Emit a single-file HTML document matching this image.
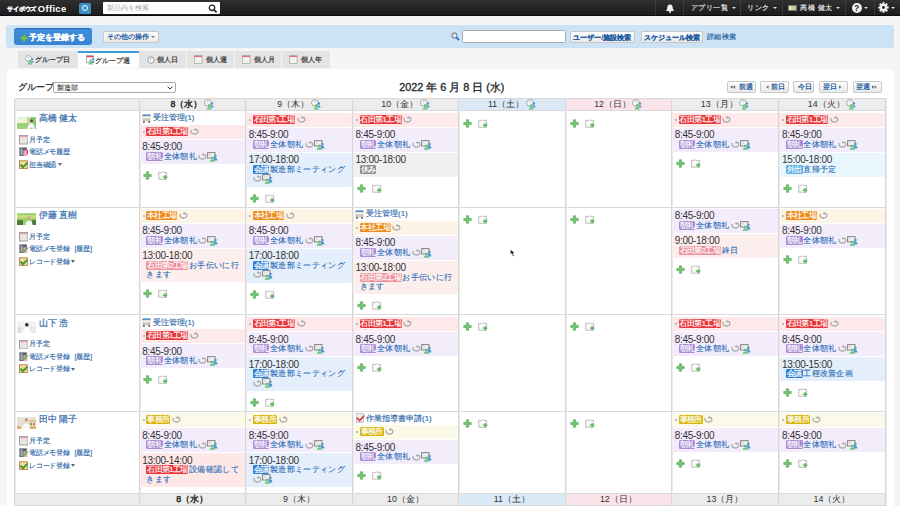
<!DOCTYPE html><html lang="ja"><head><meta charset="utf-8"><style>
*{box-sizing:border-box}
html,body{margin:0;padding:0}
body{width:900px;height:506px;overflow:hidden;position:relative;background:#f5f5f5;font-family:"Liberation Sans",sans-serif;color:#333}
.a{position:absolute}
#hd{left:0;top:0;width:900px;height:15.5px;background:linear-gradient(#303030,#1b1b1b);border-bottom:1px solid #0c0c0c}
.nav{position:absolute;top:0;height:15px;color:#e6e6e6;font-size:7.35px;letter-spacing:0.6px;line-height:15px;white-space:nowrap;-webkit-text-stroke:0.15px #eee}
.sep{position:absolute;top:0;width:1px;height:15px;background:#111;border-right:1px solid #3a3a3a}
.caret{display:inline-block;width:0;height:0;border-left:2px solid transparent;border-right:2px solid transparent;border-top:2.5px solid #ddd;vertical-align:middle;margin-left:3px}
#tb{left:6px;top:25px;width:888px;height:22.5px;background:#cbe3f5;border-radius:3px}
.btn{position:absolute;background:linear-gradient(#fdfdfd,#e9e9e9);border:1px solid #c8c8c8;border-radius:2px;color:#1f5d9f;font-weight:bold;font-size:7px;text-align:center;white-space:nowrap;-webkit-text-stroke:0.1px #1f5d9f}
.tab{position:absolute;top:51px;height:17px;background:#e4e4e4;font-size:7px;line-height:17px;color:#222;white-space:nowrap;-webkit-text-stroke:0.15px #222}
#panel{left:6.5px;top:68.5px;width:887px;height:440px;background:#fff;border-radius:4px 4px 0 0}
.hdr{position:absolute;height:12px;background:#ececec;font-size:8.8px;line-height:12px;text-align:center;color:#333;white-space:nowrap}
.vl{position:absolute;width:1px;background:#dcdcdc}
.hl{position:absolute;height:1px;background:#d9d9d9}
.cell{position:absolute;font-size:8.3px}
.ev{border-radius:1.2px;margin-bottom:1px;position:relative;overflow:hidden}
.t{position:absolute;left:2.4px;font-size:10px;letter-spacing:-0.3px;color:#333;white-space:nowrap}
.lb{display:inline-block;color:#fff;border-radius:1.5px;font-size:7.6px;letter-spacing:-0.6px;height:9px;line-height:9px;padding:0;text-align:center;vertical-align:top;white-space:nowrap;-webkit-text-stroke:0.15px #fff;margin-right:0.7px;overflow:hidden}
.tl{position:absolute;left:6.6px;white-space:nowrap;color:#2a6db8;font-size:8.3px;letter-spacing:0.3px;line-height:9px;-webkit-text-stroke:0.12px #2a6db8}
.dot{position:absolute;left:2.9px;width:2px;height:2px;border-radius:1px;background:#aaa}
.ulink{position:absolute;left:15px;font-size:6.7px;color:#2f6aa9;white-space:nowrap}
</style></head><body>
<div id="hd" class="a"></div>
<div class="a" style="left:7.3px;top:4.5px;font-size:6.2px;line-height:8px;font-weight:bold;color:#fff;white-space:nowrap;letter-spacing:-0.2px;-webkit-text-stroke:0.2px #fff">サイボウズ</div><div class="a" style="left:37.8px;top:0;line-height:17px;font-size:9.4px;letter-spacing:0.35px;font-weight:bold;color:#fff;white-space:nowrap">Office</div>
<div class="a" style="left:79px;top:2.5px;width:12px;height:11px;background:#3a8dc5;border-radius:1.5px"><div class="a" style="left:3px;top:2.5px;width:6px;height:6px;border:1.5px solid #fff;border-radius:50%"></div></div>
<div class="a" style="left:103px;top:2px;width:117px;height:11.5px;background:#fff;border-radius:1px"><div class="a" style="left:4px;top:0;line-height:11.5px;font-size:7px;color:#aaa;white-space:nowrap">製品内を検索</div><svg class="a" style="left:105px;top:1.5px" width="10" height="9" viewBox="0 0 10 9"><circle cx="4" cy="3.8" r="2.7" fill="none" stroke="#222" stroke-width="1.3"/><path d="M6 5.8 L8.6 8.4" stroke="#222" stroke-width="1.7"/></svg></div>
<div class="sep" style="left:655px"></div>
<div class="sep" style="left:683px"></div>
<div class="sep" style="left:739.5px"></div>
<div class="sep" style="left:781.5px"></div>
<div class="sep" style="left:845px"></div>
<div class="sep" style="left:873.5px"></div>
<svg class="a" style="left:664.5px;top:3.5px" width="10" height="9" viewBox="0 0 10 9"><path d="M5 0.5 C2.6 0.5 2.3 2.5 2.2 4.5 L1 7 H9 L7.8 4.5 C7.7 2.5 7.4 0.5 5 0.5 Z" fill="#f0f0f0"/><circle cx="5" cy="7.8" r="1.1" fill="#f0f0f0"/></svg>
<div class="nav" style="left:690.5px">アプリ一覧<span class="caret"></span></div>
<div class="nav" style="left:747px">リンク<span class="caret"></span></div>
<div class="a" style="left:788px;top:4.5px;width:9px;height:6.5px;background:linear-gradient(90deg,#e6efc9,#9cc47a);border:0.5px solid #777"></div>
<div class="nav" style="left:800px">高橋 健太<span class="caret"></span></div>
<div class="a" style="left:851.5px;top:2.5px;width:10px;height:10px;border-radius:50%;background:#f2f2f2;color:#222;font-size:8.5px;font-weight:bold;line-height:10px;text-align:center">?</div><span class="caret a" style="left:864px;top:6.5px;margin:0"></span>
<svg class="a" style="left:877.5px;top:2px" width="11" height="11" viewBox="0 0 11 11"><g fill="#f2f2f2"><circle cx="5.5" cy="5.5" r="3.4"/><rect x="4.4" y="0.3" width="2.2" height="3" transform="rotate(0 5.5 5.5)"/><rect x="4.4" y="0.3" width="2.2" height="3" transform="rotate(45 5.5 5.5)"/><rect x="4.4" y="0.3" width="2.2" height="3" transform="rotate(90 5.5 5.5)"/><rect x="4.4" y="0.3" width="2.2" height="3" transform="rotate(135 5.5 5.5)"/><rect x="4.4" y="0.3" width="2.2" height="3" transform="rotate(180 5.5 5.5)"/><rect x="4.4" y="0.3" width="2.2" height="3" transform="rotate(225 5.5 5.5)"/><rect x="4.4" y="0.3" width="2.2" height="3" transform="rotate(270 5.5 5.5)"/><rect x="4.4" y="0.3" width="2.2" height="3" transform="rotate(315 5.5 5.5)"/></g><circle cx="5.5" cy="5.5" r="1.4" fill="#222"/></svg><span class="caret a" style="left:891px;top:6.5px;margin:0"></span>
<div id="tb" class="a"></div>
<div class="a" style="left:13.7px;top:27.6px;width:78px;height:17.7px;background:linear-gradient(#3f8ddb,#3884d2);border-top:1px solid #2d70b8;border-radius:3px;color:#fff;font-weight:bold;font-size:8.2px;line-height:17.7px;white-space:nowrap"><svg class="a" style="left:6.5px;top:5px" width="8" height="8" viewBox="0 0 8 8"><path d="M2.8 0.4 H5.2 V2.8 H7.6 V5.2 H5.2 V7.6 H2.8 V5.2 H0.4 V2.8 H2.8 Z" fill="#74c35e" stroke="#4f9a3c" stroke-width="0.4"/></svg><span class="a" style="left:15.8px;top:0;font-size:8.1px;-webkit-text-stroke:0.25px #fff">予定を登録する</span></div>
<div class="btn" style="left:102.5px;top:30.5px;width:56.5px;height:12.8px;line-height:10.5px;text-align:left;padding-left:3.2px;font-size:6.75px;-webkit-text-stroke:0px">その他の操作</div><span class="caret a" style="left:150.5px;top:36px;margin:0;border-top-color:#777;border-left-width:2.3px;border-right-width:2.3px;border-top-width:2.8px"></span>
<svg class="a" style="left:451px;top:32px" width="9" height="9" viewBox="0 0 9 9"><circle cx="3.5" cy="3.5" r="2.6" fill="#dde8f0" stroke="#5a6a78" stroke-width="1"/><path d="M5.3 5.3 L8.2 8.2" stroke="#2f6fb0" stroke-width="1.8"/></svg>
<div class="a" style="left:461.5px;top:30px;width:104px;height:12.7px;background:#fff;border:1px solid #a9a9a9;border-radius:1.5px"></div>
<div class="btn" style="left:569.5px;top:30.5px;width:65.5px;height:12.8px;line-height:11px">ユーザー/施設検索</div>
<div class="btn" style="left:640.5px;top:30.5px;width:62.2px;height:12.8px;line-height:11px">スケジュール検索</div>
<div class="a" style="left:706.6px;top:30.5px;line-height:12.8px;font-size:7.3px;letter-spacing:0.5px;color:#2f6aa9;white-space:nowrap;-webkit-text-stroke:0.2px #2f6aa9">詳細検索</div>
<div class="tab" style="left:17.6px;width:60px;background:#e4e4e4;"><span class="a" style="left:17.5px;top:0">グループ日</span></div>
<div class="tab" style="left:77.6px;width:61px;background:#fff;border-top:2px solid #3f9bd8;line-height:15px;"><span class="a" style="left:17.5px;top:0">グループ週</span></div>
<div class="tab" style="left:138.6px;width:47px;background:#e4e4e4;"><span class="a" style="left:18.5px;top:0">個人日</span></div>
<div class="tab" style="left:187px;width:47px;background:#e4e4e4;"><span class="a" style="left:18.5px;top:0">個人週</span></div>
<div class="tab" style="left:235px;width:46px;background:#e4e4e4;"><span class="a" style="left:18.5px;top:0">個人月</span></div>
<div class="tab" style="left:282.4px;width:47.2px;background:#e4e4e4;"><span class="a" style="left:18.5px;top:0">個人年</span></div>
<svg class="a" style="left:24.8px;top:55px" width="9" height="10" viewBox="0 0 10 11"><circle cx="3.9" cy="3.9" r="3.3" fill="#fff" stroke="#999" stroke-width="0.9"/><path d="M3.9 1.8 V4.2" stroke="#999" stroke-width="0.6"/><circle cx="7.9" cy="4.6" r="1.25" fill="#4a98d6"/><path d="M6.4 8.6 Q6.6 6.2 7.9 6.2 Q9.4 6.2 9.6 8.6 Z" fill="#4a98d6"/><circle cx="5.2" cy="6.4" r="1.5" fill="#6cc47a"/><path d="M2.7 10.6 Q2.9 8 5.2 8 Q7.5 8 7.7 10.6 Z" fill="#6cc47a"/></svg>
<svg class="a" style="left:85.5px;top:55px" width="9" height="10" viewBox="0 0 10 11"><rect x="0.5" y="0.8" width="8" height="7.5" fill="#f8f8f8" stroke="#888" stroke-width="0.7"/><rect x="0.5" y="0.8" width="8" height="1.6" fill="#e05050"/><circle cx="7.9" cy="4.6" r="1.25" fill="#4a98d6"/><path d="M6.4 8.6 Q6.6 6.2 7.9 6.2 Q9.4 6.2 9.6 8.6 Z" fill="#4a98d6"/><circle cx="5.2" cy="6.4" r="1.5" fill="#6cc47a"/><path d="M2.7 10.6 Q2.9 8 5.2 8 Q7.5 8 7.7 10.6 Z" fill="#6cc47a"/></svg>
<svg class="a" style="left:147px;top:55.8px" width="8" height="8" viewBox="0 0 9 9"><circle cx="4.5" cy="4.5" r="3.6" fill="#fff" stroke="#777" stroke-width="0.8"/><path d="M4.5 2.2 L3.6 5.2" stroke="#777" stroke-width="0.7"/></svg>
<svg class="a" style="left:194px;top:55.3px" width="9" height="9" viewBox="0 0 10 10"><rect x="0.5" y="0.8" width="8.5" height="8.5" fill="#f2f2f2" stroke="#999" stroke-width="0.7"/><rect x="0.5" y="0.8" width="8.5" height="1.5" fill="#e07080"/></svg>
<svg class="a" style="left:241.5px;top:55.3px" width="9" height="9" viewBox="0 0 10 10"><rect x="0.5" y="0.8" width="8.5" height="8.5" fill="#f2f2f2" stroke="#999" stroke-width="0.7"/><rect x="0.5" y="0.8" width="8.5" height="1.5" fill="#e07080"/></svg>
<svg class="a" style="left:289px;top:55.3px" width="9" height="9" viewBox="0 0 10 10"><rect x="0.5" y="0.8" width="8.5" height="8.5" fill="#f2f2f2" stroke="#999" stroke-width="0.7"/><rect x="0.5" y="0.8" width="8.5" height="1.5" fill="#e07080"/></svg>
<div id="panel" class="a"></div>
<div class="a" style="left:17.6px;top:80px;font-size:8.7px;line-height:14px;color:#2a2a2a;white-space:nowrap;-webkit-text-stroke:0.25px #2a2a2a">グループ</div>
<div class="a" style="left:53px;top:81.6px;width:123px;height:11.6px;border:1px solid #a9a9a9;border-radius:2px;background:#fff"><span class="a" style="left:3px;top:0;font-size:7.3px;line-height:10px;color:#333;-webkit-text-stroke:0.1px #333">製造部</span><svg class="a" style="left:113px;top:3px" width="6" height="4" viewBox="0 0 6 4"><path d="M0.6 0.6 L3 3 L5.4 0.6" fill="none" stroke="#333" stroke-width="1"/></svg></div>
<div class="a" style="left:399.2px;top:79.6px;font-size:10.8px;line-height:14px;color:#222;white-space:nowrap;letter-spacing:0px;-webkit-text-stroke:0.3px #222">2022 年 6 月 8 日 (水)</div>
<div class="btn" style="left:726.5px;top:81px;width:29.5px;height:12.2px"></div>
<div class="a" style="left:738.5px;top:81px;line-height:12.2px;font-size:6.9px;font-weight:bold;color:#1f5d9f;white-space:nowrap">前週</div>
<svg class="a" style="left:730px;top:85.2px" width="5.7" height="4" viewBox="0 0 5.7 4"><path d="M2.6 0.3 L0.0 2 L2.6 3.7 Z" fill="#777"/><path d="M5.2 0.3 L2.6 2 L5.2 3.7 Z" fill="#777"/></svg>
<div class="btn" style="left:760px;top:81px;width:29px;height:12.2px"></div>
<div class="a" style="left:771.2px;top:81px;line-height:12.2px;font-size:6.9px;font-weight:bold;color:#1f5d9f;white-space:nowrap">前日</div>
<svg class="a" style="left:766px;top:85.2px" width="3.1" height="4" viewBox="0 0 3.1 4"><path d="M2.6 0.3 L0.0 2 L2.6 3.7 Z" fill="#777"/></svg>
<div class="btn" style="left:793.4px;top:81px;width:21px;height:12.2px"></div>
<div class="a" style="left:797.6px;top:81px;line-height:12.2px;font-size:6.9px;font-weight:bold;color:#1f5d9f;white-space:nowrap">今日</div>
<div class="btn" style="left:819px;top:81px;width:29px;height:12.2px"></div>
<div class="a" style="left:823px;top:81px;line-height:12.2px;font-size:6.9px;font-weight:bold;color:#1f5d9f;white-space:nowrap">翌日</div>
<svg class="a" style="left:839.2px;top:85.2px" width="3.1" height="4" viewBox="0 0 3.1 4"><path d="M0.0 0.3 L2.6 2 L0.0 3.7 Z" fill="#777"/></svg>
<div class="btn" style="left:852.5px;top:81px;width:29.5px;height:12.2px"></div>
<div class="a" style="left:856px;top:81px;line-height:12.2px;font-size:6.9px;font-weight:bold;color:#1f5d9f;white-space:nowrap">翌週</div>
<svg class="a" style="left:871.5px;top:85.2px" width="5.7" height="4" viewBox="0 0 5.7 4"><path d="M0.0 0.3 L2.6 2 L0.0 3.7 Z" fill="#777"/><path d="M2.6 0.3 L5.2 2 L2.6 3.7 Z" fill="#777"/></svg>
<div class="hdr" style="left:14px;top:98px;width:125px"></div><div class="hdr" style="left:139px;top:98px;width:106.5px;background:#ececec;-webkit-text-stroke:0.4px #222;color:#222;">8（水）<svg style="vertical-align:top;margin-top:0.5px;margin-left:1.5px" width="10" height="11" viewBox="0 0 10 11"><circle cx="3.9" cy="3.9" r="3.3" fill="#fff" stroke="#999" stroke-width="0.9"/><path d="M3.9 1.8 V4.2" stroke="#999" stroke-width="0.6"/><circle cx="7.9" cy="4.6" r="1.25" fill="#4a98d6"/><path d="M6.4 8.6 Q6.6 6.2 7.9 6.2 Q9.4 6.2 9.6 8.6 Z" fill="#4a98d6"/><circle cx="5.2" cy="6.4" r="1.5" fill="#6cc47a"/><path d="M2.7 10.6 Q2.9 8 5.2 8 Q7.5 8 7.7 10.6 Z" fill="#6cc47a"/></svg></div><div class="hdr" style="left:245.5px;top:98px;width:106.80000000000001px;background:#ececec;">9（木）<svg style="vertical-align:top;margin-top:0.5px;margin-left:1.5px" width="10" height="11" viewBox="0 0 10 11"><circle cx="3.9" cy="3.9" r="3.3" fill="#fff" stroke="#999" stroke-width="0.9"/><path d="M3.9 1.8 V4.2" stroke="#999" stroke-width="0.6"/><circle cx="7.9" cy="4.6" r="1.25" fill="#4a98d6"/><path d="M6.4 8.6 Q6.6 6.2 7.9 6.2 Q9.4 6.2 9.6 8.6 Z" fill="#4a98d6"/><circle cx="5.2" cy="6.4" r="1.5" fill="#6cc47a"/><path d="M2.7 10.6 Q2.9 8 5.2 8 Q7.5 8 7.7 10.6 Z" fill="#6cc47a"/></svg></div><div class="hdr" style="left:352.3px;top:98px;width:106.19999999999999px;background:#ececec;">10（金）<svg style="vertical-align:top;margin-top:0.5px;margin-left:1.5px" width="10" height="11" viewBox="0 0 10 11"><circle cx="3.9" cy="3.9" r="3.3" fill="#fff" stroke="#999" stroke-width="0.9"/><path d="M3.9 1.8 V4.2" stroke="#999" stroke-width="0.6"/><circle cx="7.9" cy="4.6" r="1.25" fill="#4a98d6"/><path d="M6.4 8.6 Q6.6 6.2 7.9 6.2 Q9.4 6.2 9.6 8.6 Z" fill="#4a98d6"/><circle cx="5.2" cy="6.4" r="1.5" fill="#6cc47a"/><path d="M2.7 10.6 Q2.9 8 5.2 8 Q7.5 8 7.7 10.6 Z" fill="#6cc47a"/></svg></div><div class="hdr" style="left:458.5px;top:98px;width:106.79999999999995px;background:#dbe9f7;">11（土）<svg style="vertical-align:top;margin-top:0.5px;margin-left:1.5px" width="10" height="11" viewBox="0 0 10 11"><circle cx="3.9" cy="3.9" r="3.3" fill="#fff" stroke="#999" stroke-width="0.9"/><path d="M3.9 1.8 V4.2" stroke="#999" stroke-width="0.6"/><circle cx="7.9" cy="4.6" r="1.25" fill="#4a98d6"/><path d="M6.4 8.6 Q6.6 6.2 7.9 6.2 Q9.4 6.2 9.6 8.6 Z" fill="#4a98d6"/><circle cx="5.2" cy="6.4" r="1.5" fill="#6cc47a"/><path d="M2.7 10.6 Q2.9 8 5.2 8 Q7.5 8 7.7 10.6 Z" fill="#6cc47a"/></svg></div><div class="hdr" style="left:565.3px;top:98px;width:106.10000000000002px;background:#fbe3ea;">12（日）<svg style="vertical-align:top;margin-top:0.5px;margin-left:1.5px" width="10" height="11" viewBox="0 0 10 11"><circle cx="3.9" cy="3.9" r="3.3" fill="#fff" stroke="#999" stroke-width="0.9"/><path d="M3.9 1.8 V4.2" stroke="#999" stroke-width="0.6"/><circle cx="7.9" cy="4.6" r="1.25" fill="#4a98d6"/><path d="M6.4 8.6 Q6.6 6.2 7.9 6.2 Q9.4 6.2 9.6 8.6 Z" fill="#4a98d6"/><circle cx="5.2" cy="6.4" r="1.5" fill="#6cc47a"/><path d="M2.7 10.6 Q2.9 8 5.2 8 Q7.5 8 7.7 10.6 Z" fill="#6cc47a"/></svg></div><div class="hdr" style="left:671.4px;top:98px;width:107.20000000000005px;background:#ececec;">13（月）<svg style="vertical-align:top;margin-top:0.5px;margin-left:1.5px" width="10" height="11" viewBox="0 0 10 11"><circle cx="3.9" cy="3.9" r="3.3" fill="#fff" stroke="#999" stroke-width="0.9"/><path d="M3.9 1.8 V4.2" stroke="#999" stroke-width="0.6"/><circle cx="7.9" cy="4.6" r="1.25" fill="#4a98d6"/><path d="M6.4 8.6 Q6.6 6.2 7.9 6.2 Q9.4 6.2 9.6 8.6 Z" fill="#4a98d6"/><circle cx="5.2" cy="6.4" r="1.5" fill="#6cc47a"/><path d="M2.7 10.6 Q2.9 8 5.2 8 Q7.5 8 7.7 10.6 Z" fill="#6cc47a"/></svg></div><div class="hdr" style="left:778.6px;top:98px;width:106.60000000000002px;background:#ececec;">14（火）<svg style="vertical-align:top;margin-top:0.5px;margin-left:1.5px" width="10" height="11" viewBox="0 0 10 11"><circle cx="3.9" cy="3.9" r="3.3" fill="#fff" stroke="#999" stroke-width="0.9"/><path d="M3.9 1.8 V4.2" stroke="#999" stroke-width="0.6"/><circle cx="7.9" cy="4.6" r="1.25" fill="#4a98d6"/><path d="M6.4 8.6 Q6.6 6.2 7.9 6.2 Q9.4 6.2 9.6 8.6 Z" fill="#4a98d6"/><circle cx="5.2" cy="6.4" r="1.5" fill="#6cc47a"/><path d="M2.7 10.6 Q2.9 8 5.2 8 Q7.5 8 7.7 10.6 Z" fill="#6cc47a"/></svg></div>
<div class="hdr" style="left:14px;top:493px;width:125px"></div><div class="hdr" style="left:139px;top:493px;width:106.5px;background:#ececec;-webkit-text-stroke:0.4px #222;color:#222;">8（水）</div><div class="hdr" style="left:245.5px;top:493px;width:106.80000000000001px;background:#ececec;">9（木）</div><div class="hdr" style="left:352.3px;top:493px;width:106.19999999999999px;background:#ececec;">10（金）</div><div class="hdr" style="left:458.5px;top:493px;width:106.79999999999995px;background:#dbe9f7;">11（土）</div><div class="hdr" style="left:565.3px;top:493px;width:106.10000000000002px;background:#fbe3ea;">12（日）</div><div class="hdr" style="left:671.4px;top:493px;width:107.20000000000005px;background:#ececec;">13（月）</div><div class="hdr" style="left:778.6px;top:493px;width:106.60000000000002px;background:#ececec;">14（火）</div>
<div class="hl" style="left:14px;top:97.5px;width:871px"></div>
<div class="hl" style="left:14px;top:110px;width:871px"></div>
<div class="hl" style="left:14px;top:207px;width:871px"></div>
<div class="hl" style="left:14px;top:314px;width:871px"></div>
<div class="hl" style="left:14px;top:411px;width:871px"></div>
<div class="hl" style="left:14px;top:492.5px;width:871px"></div>
<div class="hl" style="left:14px;top:505px;width:871px"></div>
<div class="vl" style="left:14px;top:98px;height:408px;width:2px;background:linear-gradient(90deg,#d7d7d7 50%,#e9e9e9 50%)"></div>
<div class="vl" style="left:139px;top:98px;height:408px;width:2px;background:linear-gradient(90deg,#d7d7d7 50%,#e9e9e9 50%)"></div>
<div class="vl" style="left:245px;top:98px;height:408px;width:2px;background:linear-gradient(90deg,#d7d7d7 50%,#e9e9e9 50%)"></div>
<div class="vl" style="left:352px;top:98px;height:408px;width:2px;background:linear-gradient(90deg,#d7d7d7 50%,#e9e9e9 50%)"></div>
<div class="vl" style="left:458px;top:98px;height:408px;width:2px;background:linear-gradient(90deg,#d7d7d7 50%,#e9e9e9 50%)"></div>
<div class="vl" style="left:565px;top:98px;height:408px;width:2px;background:linear-gradient(90deg,#d7d7d7 50%,#e9e9e9 50%)"></div>
<div class="vl" style="left:671px;top:98px;height:408px;width:2px;background:linear-gradient(90deg,#d7d7d7 50%,#e9e9e9 50%)"></div>
<div class="vl" style="left:778px;top:98px;height:408px;width:2px;background:linear-gradient(90deg,#d7d7d7 50%,#e9e9e9 50%)"></div>
<div class="vl" style="left:885px;top:98px;height:408px;width:2px;background:linear-gradient(90deg,#d7d7d7 50%,#e9e9e9 50%)"></div>
<svg class="a" style="left:17px;top:116.5px" width="19" height="12.3" viewBox="0 0 19 12"><rect width="19" height="12" fill="#b9dc9a"/><rect x="0" y="0" width="10" height="6" fill="#eef3dc"/><rect x="0" y="6" width="19" height="6" fill="#9fd07e"/><rect x="14" y="0" width="5" height="12" fill="#8cc46e"/><circle cx="14.5" cy="3.6" r="1.6" fill="#6a5040"/><path d="M10.5 12 Q10.8 5.8 14.3 5.8 Q17.6 5.8 17.8 12 Z" fill="#f4f7fb"/><rect x="13.6" y="10.5" width="2" height="1.5" fill="#e0b050"/></svg>
<div class="a" style="left:38.5px;top:113px;font-size:8.6px;line-height:10px;color:#2f6aa9;white-space:nowrap;-webkit-text-stroke:0.2px #2f6aa9">高橋 健太</div>
<svg class="a" style="left:18.8px;top:135.0px" width="9.5" height="9.5" viewBox="0 0 9.5 9.5"><rect x="0.5" y="0.5" width="8.5" height="8.5" fill="#e9e5e2" stroke="#8c8c8c" stroke-width="0.8"/><rect x="0.9" y="0.9" width="7.7" height="1.3" fill="#e3a3b6"/></svg>
<div class="a" style="left:29.3px;top:134.6px;font-size:6.7px;letter-spacing:-0.35px;line-height:10px;color:#2f6aa9;white-space:nowrap;-webkit-text-stroke:0.15px #2f6aa9">月予定</div>
<svg class="a" style="left:18.8px;top:147.45px" width="9.5" height="9.5" viewBox="0 0 9.5 9.5"><rect x="0.4" y="0.4" width="7.5" height="8.6" fill="#5b6470"/><rect x="1.6" y="1.6" width="2" height="6.4" fill="#a9b0b8"/><rect x="4.4" y="3.4" width="4" height="5.6" fill="#f2a2c6"/><rect x="8" y="3" width="1.2" height="4" fill="#e03030"/></svg>
<div class="a" style="left:29.3px;top:147.04999999999998px;font-size:6.7px;letter-spacing:-0.35px;line-height:10px;color:#2f6aa9;white-space:nowrap;-webkit-text-stroke:0.15px #2f6aa9">電話メモ履歴</div>
<svg class="a" style="left:18.8px;top:159.9px" width="9.5" height="9.5" viewBox="0 0 9.5 9.5"><rect x="0.5" y="0.8" width="7.8" height="7.8" fill="#f1dca8" stroke="#b9823e" stroke-width="0.9"/><path d="M1.6 4.6 L3.8 7.2 L8.6 2.6" fill="none" stroke="#3f9a2a" stroke-width="2"/></svg>
<div class="a" style="left:29.3px;top:159.5px;font-size:6.7px;letter-spacing:-0.35px;line-height:10px;color:#2f6aa9;white-space:nowrap;-webkit-text-stroke:0.15px #2f6aa9">担当確認<span class="caret" style="border-top-color:#666;border-left-width:2.5px;border-right-width:2.5px;border-top-width:3px;margin-left:2px;-webkit-text-stroke:0"></span></div>
<svg class="a" style="left:17px;top:213px" width="19" height="12.3" viewBox="0 0 19 12"><rect width="19" height="12" fill="#9cce6c"/><rect x="0" y="2" width="19" height="3" fill="#c9e07a"/><rect x="0" y="7" width="6" height="5" fill="#4f7a3a"/><rect x="15" y="7" width="4" height="5" fill="#4f7a3a"/><circle cx="12" cy="4.6" r="1.7" fill="#d9a0a0"/><path d="M8.6 12 Q8.8 7.6 12 7.6 Q15.4 7.6 15.6 12 Z" fill="#f8f9fb"/></svg>
<div class="a" style="left:38.5px;top:210px;font-size:8.6px;line-height:10px;color:#2f6aa9;white-space:nowrap;-webkit-text-stroke:0.2px #2f6aa9">伊藤 直樹</div>
<svg class="a" style="left:18.8px;top:232.0px" width="9.5" height="9.5" viewBox="0 0 9.5 9.5"><rect x="0.5" y="0.5" width="8.5" height="8.5" fill="#e9e5e2" stroke="#8c8c8c" stroke-width="0.8"/><rect x="0.9" y="0.9" width="7.7" height="1.3" fill="#e3a3b6"/></svg>
<div class="a" style="left:29.3px;top:231.6px;font-size:6.7px;letter-spacing:-0.35px;line-height:10px;color:#2f6aa9;white-space:nowrap;-webkit-text-stroke:0.15px #2f6aa9">月予定</div>
<svg class="a" style="left:18.8px;top:244.45px" width="9.5" height="9.5" viewBox="0 0 9.5 9.5"><rect x="0.4" y="0.4" width="7.5" height="8.6" fill="#5b6470"/><rect x="1.6" y="1.6" width="2" height="6.4" fill="#a9b0b8"/><rect x="4.4" y="3.4" width="4" height="5.6" fill="#f2a2c6"/><path d="M3.6 8.6 L8.6 3.6" stroke="#5cb83c" stroke-width="1.6"/></svg>
<div class="a" style="left:29.3px;top:244.04999999999998px;font-size:6.7px;letter-spacing:-0.35px;line-height:10px;color:#2f6aa9;white-space:nowrap;-webkit-text-stroke:0.15px #2f6aa9">電話メモ登録<span style="margin-left:5.2px;letter-spacing:0px">[履歴]</span></div>
<svg class="a" style="left:18.8px;top:256.9px" width="9.5" height="9.5" viewBox="0 0 9.5 9.5"><rect x="0.5" y="0.8" width="7.8" height="7.8" fill="#f1dca8" stroke="#b9823e" stroke-width="0.9"/><path d="M1.6 4.6 L3.8 7.2 L8.6 2.6" fill="none" stroke="#3f9a2a" stroke-width="2"/></svg>
<div class="a" style="left:29.3px;top:256.5px;font-size:6.7px;letter-spacing:-0.35px;line-height:10px;color:#2f6aa9;white-space:nowrap;-webkit-text-stroke:0.15px #2f6aa9">レコード登録<span class="caret" style="border-top-color:#666;border-left-width:2.5px;border-right-width:2.5px;border-top-width:3px;margin-left:2px;-webkit-text-stroke:0"></span></div>
<svg class="a" style="left:17px;top:321.0px" width="19" height="12.3" viewBox="0 0 19 12"><rect width="19" height="12" fill="#f1f1f3"/><rect x="0" y="6" width="19" height="6" fill="#e8e9ed"/><circle cx="9.8" cy="3.6" r="1.8" fill="#2e2e36"/><rect x="9.6" y="5" width="1.2" height="1.4" fill="#e0a848"/><path d="M5.6 12 Q6.6 6.2 9.8 6.2 Q13 6.2 14 12 Z" fill="#ffffff"/><rect x="1.5" y="6" width="2" height="6" fill="#d4e0ec"/></svg>
<div class="a" style="left:38.5px;top:317.5px;font-size:8.6px;line-height:10px;color:#2f6aa9;white-space:nowrap;-webkit-text-stroke:0.2px #2f6aa9">山下 浩</div>
<svg class="a" style="left:18.8px;top:339.5px" width="9.5" height="9.5" viewBox="0 0 9.5 9.5"><rect x="0.5" y="0.5" width="8.5" height="8.5" fill="#e9e5e2" stroke="#8c8c8c" stroke-width="0.8"/><rect x="0.9" y="0.9" width="7.7" height="1.3" fill="#e3a3b6"/></svg>
<div class="a" style="left:29.3px;top:339.1px;font-size:6.7px;letter-spacing:-0.35px;line-height:10px;color:#2f6aa9;white-space:nowrap;-webkit-text-stroke:0.15px #2f6aa9">月予定</div>
<svg class="a" style="left:18.8px;top:351.95px" width="9.5" height="9.5" viewBox="0 0 9.5 9.5"><rect x="0.4" y="0.4" width="7.5" height="8.6" fill="#5b6470"/><rect x="1.6" y="1.6" width="2" height="6.4" fill="#a9b0b8"/><rect x="4.4" y="3.4" width="4" height="5.6" fill="#f2a2c6"/><path d="M3.6 8.6 L8.6 3.6" stroke="#5cb83c" stroke-width="1.6"/></svg>
<div class="a" style="left:29.3px;top:351.55px;font-size:6.7px;letter-spacing:-0.35px;line-height:10px;color:#2f6aa9;white-space:nowrap;-webkit-text-stroke:0.15px #2f6aa9">電話メモ登録<span style="margin-left:5.2px;letter-spacing:0px">[履歴]</span></div>
<svg class="a" style="left:18.8px;top:364.4px" width="9.5" height="9.5" viewBox="0 0 9.5 9.5"><rect x="0.5" y="0.8" width="7.8" height="7.8" fill="#f1dca8" stroke="#b9823e" stroke-width="0.9"/><path d="M1.6 4.6 L3.8 7.2 L8.6 2.6" fill="none" stroke="#3f9a2a" stroke-width="2"/></svg>
<div class="a" style="left:29.3px;top:364.0px;font-size:6.7px;letter-spacing:-0.35px;line-height:10px;color:#2f6aa9;white-space:nowrap;-webkit-text-stroke:0.15px #2f6aa9">レコード登録<span class="caret" style="border-top-color:#666;border-left-width:2.5px;border-right-width:2.5px;border-top-width:3px;margin-left:2px;-webkit-text-stroke:0"></span></div>
<svg class="a" style="left:17px;top:417px" width="19" height="12.3" viewBox="0 0 19 12"><rect width="19" height="12" fill="#e9e2d4"/><rect x="12" y="3" width="7" height="2" fill="#d8c08a"/><rect x="12" y="9" width="7" height="3" fill="#d9b46a"/><rect x="0" y="9" width="4" height="3" fill="#d9b46a"/><rect x="13" y="6" width="2" height="2" fill="#6aa040"/><rect x="16" y="6" width="2" height="2" fill="#c86a3a"/><circle cx="9.3" cy="3.6" r="1.7" fill="#e8b0a8"/><path d="M8 2.6 Q9.3 0.8 10.8 2.4 Z" fill="#333"/><path d="M5.4 12 Q5.8 6.4 9.4 6.4 Q12.6 6.4 13 12 Z" fill="#fbfbfb"/></svg>
<div class="a" style="left:38.5px;top:414px;font-size:8.6px;line-height:10px;color:#2f6aa9;white-space:nowrap;-webkit-text-stroke:0.2px #2f6aa9">田中 陽子</div>
<svg class="a" style="left:18.8px;top:436.0px" width="9.5" height="9.5" viewBox="0 0 9.5 9.5"><rect x="0.5" y="0.5" width="8.5" height="8.5" fill="#e9e5e2" stroke="#8c8c8c" stroke-width="0.8"/><rect x="0.9" y="0.9" width="7.7" height="1.3" fill="#e3a3b6"/></svg>
<div class="a" style="left:29.3px;top:435.6px;font-size:6.7px;letter-spacing:-0.35px;line-height:10px;color:#2f6aa9;white-space:nowrap;-webkit-text-stroke:0.15px #2f6aa9">月予定</div>
<svg class="a" style="left:18.8px;top:448.45px" width="9.5" height="9.5" viewBox="0 0 9.5 9.5"><rect x="0.4" y="0.4" width="7.5" height="8.6" fill="#5b6470"/><rect x="1.6" y="1.6" width="2" height="6.4" fill="#a9b0b8"/><rect x="4.4" y="3.4" width="4" height="5.6" fill="#f2a2c6"/><path d="M3.6 8.6 L8.6 3.6" stroke="#5cb83c" stroke-width="1.6"/></svg>
<div class="a" style="left:29.3px;top:448.05px;font-size:6.7px;letter-spacing:-0.35px;line-height:10px;color:#2f6aa9;white-space:nowrap;-webkit-text-stroke:0.15px #2f6aa9">電話メモ登録<span style="margin-left:5.2px;letter-spacing:0px">[履歴]</span></div>
<svg class="a" style="left:18.8px;top:460.9px" width="9.5" height="9.5" viewBox="0 0 9.5 9.5"><rect x="0.5" y="0.8" width="7.8" height="7.8" fill="#f1dca8" stroke="#b9823e" stroke-width="0.9"/><path d="M1.6 4.6 L3.8 7.2 L8.6 2.6" fill="none" stroke="#3f9a2a" stroke-width="2"/></svg>
<div class="a" style="left:29.3px;top:460.5px;font-size:6.7px;letter-spacing:-0.35px;line-height:10px;color:#2f6aa9;white-space:nowrap;-webkit-text-stroke:0.15px #2f6aa9">レコード登録<span class="caret" style="border-top-color:#666;border-left-width:2.5px;border-right-width:2.5px;border-top-width:3px;margin-left:2px;-webkit-text-stroke:0"></span></div>
<div class="cell" style="left:139.9px;top:112.5px;width:105.3px"><div class="ev" style="height:11px;overflow:visible"><svg class="a" style="left:2.2px;top:1.2px" width="9" height="9" viewBox="0 0 9 9"><rect x="0.5" y="0.5" width="8" height="6.8" rx="0.8" fill="#c9c9c9"/><rect x="0.5" y="0.5" width="8" height="1.6" fill="#4a90d0"/><rect x="1" y="2.4" width="7" height="1.8" fill="#fbf6ea"/><rect x="1" y="5.6" width="1.3" height="1" fill="#e8b840"/><rect x="6.7" y="5.6" width="1.3" height="1" fill="#e8b840"/><rect x="1" y="7.2" width="1.8" height="1.4" fill="#444"/><rect x="6.2" y="7.2" width="1.8" height="1.4" fill="#444"/></svg><div class="a" style="left:12.9px;top:0.5px;font-size:7.8px;color:#2f6aa9;white-space:nowrap;line-height:9px;-webkit-text-stroke:0.15px #2f6aa9">受注管理(1)</div></div><div class="ev" style="height:14px;background:#fde9e9"><div class="dot" style="top:6px"></div><div class="a" style="left:6.5px;top:2.2px"><span class="lb" style="background:#e8363a;width:42px">石田第1工場</span></div><svg class="a" style="left:50.2px;top:3.2px" width="9" height="7" viewBox="0 0 9 7"><path d="M1.2 1.8 C0.5 4.6 1.8 6 4.2 6 C6.6 6 8 5 7.8 3.2 C7.6 1.6 6.6 1.3 5.2 1.5" fill="none" stroke="#acacac" stroke-width="1.3"/><path d="M5.8 0 L3.5 1.6 L5.8 3.1 Z" fill="#acacac"/></svg></div><div class="ev" style="height:24px;background:#f2ecfb"><div class="t" style="top:1.6px">8:45-9:00</div><div class="tl" style="top:12px"><span class="lb" style="background:#a98bd5;width:16.5px">朝礼</span>全体朝礼</div><svg class="a" style="left:58.4px;top:13.4px" width="9" height="7" viewBox="0 0 9 7"><path d="M1.2 1.8 C0.5 4.6 1.8 6 4.2 6 C6.6 6 8 5 7.8 3.2 C7.6 1.6 6.6 1.3 5.2 1.5" fill="none" stroke="#acacac" stroke-width="1.3"/><path d="M5.8 0 L3.5 1.6 L5.8 3.1 Z" fill="#acacac"/></svg><svg class="a" style="left:67.4px;top:12px" width="11" height="10" viewBox="0 0 11 10"><rect x="0.6" y="0.6" width="7.4" height="5.4" fill="#f0f0f0" stroke="#858585" stroke-width="1"/><path d="M2 1.8 L3.8 3.4" stroke="#aaa" stroke-width="0.6"/><circle cx="8.4" cy="4" r="1.3" fill="#4a98d6"/><path d="M6.6 8.6 Q6.8 5.6 8.4 5.6 Q10.2 5.6 10.4 8.6 Z" fill="#4a98d6"/><circle cx="5.4" cy="5.9" r="1.5" fill="#6cc47a"/><path d="M2.6 9.8 Q2.9 7.4 5.4 7.4 Q7.9 7.4 8.2 9.8 Z" fill="#6cc47a"/></svg></div><div style="position:relative;height:9px;margin-top:7px"><svg class="a" style="left:3.4px;top:0px" width="9" height="9" viewBox="0 0 9 9"><path d="M3.4 0.8 H5.6 V3.4 H8.2 V5.6 H5.6 V8.2 H3.4 V5.6 H0.8 V3.4 H3.4 Z" fill="#72c472" stroke="#56ad56" stroke-width="0.7" stroke-linejoin="round"/></svg><svg class="a" style="left:18.6px;top:0px" width="10" height="9" viewBox="0 0 10 9"><path d="M0.7 1.4 H3.8 L4.6 0.6 L5.4 1.4 H8.6 V8.2 H0.7 Z" fill="#fbfbfb" stroke="#ababab" stroke-width="0.8"/><path d="M4.9 6.1 H9.3 M7.1 3.9 V8.6" stroke="#3fb43f" stroke-width="1.1"/></svg></div></div>
<div class="cell" style="left:246.4px;top:112.5px;width:105.60000000000001px"><div class="ev" style="height:14px;background:#fde9e9"><div class="dot" style="top:6px"></div><div class="a" style="left:6.5px;top:2.2px"><span class="lb" style="background:#e8363a;width:42px">石田第1工場</span></div><svg class="a" style="left:50.2px;top:3.2px" width="9" height="7" viewBox="0 0 9 7"><path d="M1.2 1.8 C0.5 4.6 1.8 6 4.2 6 C6.6 6 8 5 7.8 3.2 C7.6 1.6 6.6 1.3 5.2 1.5" fill="none" stroke="#acacac" stroke-width="1.3"/><path d="M5.8 0 L3.5 1.6 L5.8 3.1 Z" fill="#acacac"/></svg></div><div class="ev" style="height:24px;background:#f2ecfb"><div class="t" style="top:1.6px">8:45-9:00</div><div class="tl" style="top:12px"><span class="lb" style="background:#a98bd5;width:16.5px">朝礼</span>全体朝礼</div><svg class="a" style="left:58.4px;top:13.4px" width="9" height="7" viewBox="0 0 9 7"><path d="M1.2 1.8 C0.5 4.6 1.8 6 4.2 6 C6.6 6 8 5 7.8 3.2 C7.6 1.6 6.6 1.3 5.2 1.5" fill="none" stroke="#acacac" stroke-width="1.3"/><path d="M5.8 0 L3.5 1.6 L5.8 3.1 Z" fill="#acacac"/></svg><svg class="a" style="left:67.4px;top:12px" width="11" height="10" viewBox="0 0 11 10"><rect x="0.6" y="0.6" width="7.4" height="5.4" fill="#f0f0f0" stroke="#858585" stroke-width="1"/><path d="M2 1.8 L3.8 3.4" stroke="#aaa" stroke-width="0.6"/><circle cx="8.4" cy="4" r="1.3" fill="#4a98d6"/><path d="M6.6 8.6 Q6.8 5.6 8.4 5.6 Q10.2 5.6 10.4 8.6 Z" fill="#4a98d6"/><circle cx="5.4" cy="5.9" r="1.5" fill="#6cc47a"/><path d="M2.6 9.8 Q2.9 7.4 5.4 7.4 Q7.9 7.4 8.2 9.8 Z" fill="#6cc47a"/></svg></div><div class="ev" style="height:34px;background:#e4effb"><div class="t" style="top:1.6px">17:00-18:00</div><div class="tl" style="top:12px"><span class="lb" style="background:#2f7ed6;width:16.5px">会議</span>製造部ミーティング</div><svg class="a" style="left:6.4px;top:22.5px" width="9" height="7" viewBox="0 0 9 7"><path d="M1.2 1.8 C0.5 4.6 1.8 6 4.2 6 C6.6 6 8 5 7.8 3.2 C7.6 1.6 6.6 1.3 5.2 1.5" fill="none" stroke="#acacac" stroke-width="1.3"/><path d="M5.8 0 L3.5 1.6 L5.8 3.1 Z" fill="#acacac"/></svg><svg class="a" style="left:15.4px;top:21px" width="11" height="10" viewBox="0 0 11 10"><rect x="0.6" y="0.6" width="7.4" height="5.4" fill="#f0f0f0" stroke="#858585" stroke-width="1"/><path d="M2 1.8 L3.8 3.4" stroke="#aaa" stroke-width="0.6"/><circle cx="8.4" cy="4" r="1.3" fill="#4a98d6"/><path d="M6.6 8.6 Q6.8 5.6 8.4 5.6 Q10.2 5.6 10.4 8.6 Z" fill="#4a98d6"/><circle cx="5.4" cy="5.9" r="1.5" fill="#6cc47a"/><path d="M2.6 9.8 Q2.9 7.4 5.4 7.4 Q7.9 7.4 8.2 9.8 Z" fill="#6cc47a"/></svg></div><div style="position:relative;height:9px;margin-top:7px"><svg class="a" style="left:3.4px;top:0px" width="9" height="9" viewBox="0 0 9 9"><path d="M3.4 0.8 H5.6 V3.4 H8.2 V5.6 H5.6 V8.2 H3.4 V5.6 H0.8 V3.4 H3.4 Z" fill="#72c472" stroke="#56ad56" stroke-width="0.7" stroke-linejoin="round"/></svg><svg class="a" style="left:18.6px;top:0px" width="10" height="9" viewBox="0 0 10 9"><path d="M0.7 1.4 H3.8 L4.6 0.6 L5.4 1.4 H8.6 V8.2 H0.7 Z" fill="#fbfbfb" stroke="#ababab" stroke-width="0.8"/><path d="M4.9 6.1 H9.3 M7.1 3.9 V8.6" stroke="#3fb43f" stroke-width="1.1"/></svg></div></div>
<div class="cell" style="left:353.2px;top:112.5px;width:104.99999999999999px"><div class="ev" style="height:14px;background:#fde9e9"><div class="dot" style="top:6px"></div><div class="a" style="left:6.5px;top:2.2px"><span class="lb" style="background:#e8363a;width:42px">石田第1工場</span></div><svg class="a" style="left:50.2px;top:3.2px" width="9" height="7" viewBox="0 0 9 7"><path d="M1.2 1.8 C0.5 4.6 1.8 6 4.2 6 C6.6 6 8 5 7.8 3.2 C7.6 1.6 6.6 1.3 5.2 1.5" fill="none" stroke="#acacac" stroke-width="1.3"/><path d="M5.8 0 L3.5 1.6 L5.8 3.1 Z" fill="#acacac"/></svg></div><div class="ev" style="height:24px;background:#f2ecfb"><div class="t" style="top:1.6px">8:45-9:00</div><div class="tl" style="top:12px"><span class="lb" style="background:#a98bd5;width:16.5px">朝礼</span>全体朝礼</div><svg class="a" style="left:58.4px;top:13.4px" width="9" height="7" viewBox="0 0 9 7"><path d="M1.2 1.8 C0.5 4.6 1.8 6 4.2 6 C6.6 6 8 5 7.8 3.2 C7.6 1.6 6.6 1.3 5.2 1.5" fill="none" stroke="#acacac" stroke-width="1.3"/><path d="M5.8 0 L3.5 1.6 L5.8 3.1 Z" fill="#acacac"/></svg><svg class="a" style="left:67.4px;top:12px" width="11" height="10" viewBox="0 0 11 10"><rect x="0.6" y="0.6" width="7.4" height="5.4" fill="#f0f0f0" stroke="#858585" stroke-width="1"/><path d="M2 1.8 L3.8 3.4" stroke="#aaa" stroke-width="0.6"/><circle cx="8.4" cy="4" r="1.3" fill="#4a98d6"/><path d="M6.6 8.6 Q6.8 5.6 8.4 5.6 Q10.2 5.6 10.4 8.6 Z" fill="#4a98d6"/><circle cx="5.4" cy="5.9" r="1.5" fill="#6cc47a"/><path d="M2.6 9.8 Q2.9 7.4 5.4 7.4 Q7.9 7.4 8.2 9.8 Z" fill="#6cc47a"/></svg></div><div class="ev" style="height:24px;background:#efefef"><div class="t" style="top:1.6px">13:00-18:00</div><div class="tl" style="top:12px"><span class="lb" style="background:#8e8e8e;width:16.5px">休み</span></div></div><div style="position:relative;height:9px;margin-top:7px"><svg class="a" style="left:3.4px;top:0px" width="9" height="9" viewBox="0 0 9 9"><path d="M3.4 0.8 H5.6 V3.4 H8.2 V5.6 H5.6 V8.2 H3.4 V5.6 H0.8 V3.4 H3.4 Z" fill="#72c472" stroke="#56ad56" stroke-width="0.7" stroke-linejoin="round"/></svg><svg class="a" style="left:18.6px;top:0px" width="10" height="9" viewBox="0 0 10 9"><path d="M0.7 1.4 H3.8 L4.6 0.6 L5.4 1.4 H8.6 V8.2 H0.7 Z" fill="#fbfbfb" stroke="#ababab" stroke-width="0.8"/><path d="M4.9 6.1 H9.3 M7.1 3.9 V8.6" stroke="#3fb43f" stroke-width="1.1"/></svg></div></div>
<div class="cell" style="left:459.4px;top:112.5px;width:105.59999999999995px"><div style="position:relative;height:9px;margin-top:6.5px"><svg class="a" style="left:3.4px;top:0px" width="9" height="9" viewBox="0 0 9 9"><path d="M3.4 0.8 H5.6 V3.4 H8.2 V5.6 H5.6 V8.2 H3.4 V5.6 H0.8 V3.4 H3.4 Z" fill="#72c472" stroke="#56ad56" stroke-width="0.7" stroke-linejoin="round"/></svg><svg class="a" style="left:18.6px;top:0px" width="10" height="9" viewBox="0 0 10 9"><path d="M0.7 1.4 H3.8 L4.6 0.6 L5.4 1.4 H8.6 V8.2 H0.7 Z" fill="#fbfbfb" stroke="#ababab" stroke-width="0.8"/><path d="M4.9 6.1 H9.3 M7.1 3.9 V8.6" stroke="#3fb43f" stroke-width="1.1"/></svg></div></div>
<div class="cell" style="left:566.1999999999999px;top:112.5px;width:104.90000000000002px"><div style="position:relative;height:9px;margin-top:6.5px"><svg class="a" style="left:3.4px;top:0px" width="9" height="9" viewBox="0 0 9 9"><path d="M3.4 0.8 H5.6 V3.4 H8.2 V5.6 H5.6 V8.2 H3.4 V5.6 H0.8 V3.4 H3.4 Z" fill="#72c472" stroke="#56ad56" stroke-width="0.7" stroke-linejoin="round"/></svg><svg class="a" style="left:18.6px;top:0px" width="10" height="9" viewBox="0 0 10 9"><path d="M0.7 1.4 H3.8 L4.6 0.6 L5.4 1.4 H8.6 V8.2 H0.7 Z" fill="#fbfbfb" stroke="#ababab" stroke-width="0.8"/><path d="M4.9 6.1 H9.3 M7.1 3.9 V8.6" stroke="#3fb43f" stroke-width="1.1"/></svg></div></div>
<div class="cell" style="left:672.3px;top:112.5px;width:106.00000000000004px"><div class="ev" style="height:14px;background:#fde9e9"><div class="dot" style="top:6px"></div><div class="a" style="left:6.5px;top:2.2px"><span class="lb" style="background:#e8363a;width:42px">石田第1工場</span></div><svg class="a" style="left:50.2px;top:3.2px" width="9" height="7" viewBox="0 0 9 7"><path d="M1.2 1.8 C0.5 4.6 1.8 6 4.2 6 C6.6 6 8 5 7.8 3.2 C7.6 1.6 6.6 1.3 5.2 1.5" fill="none" stroke="#acacac" stroke-width="1.3"/><path d="M5.8 0 L3.5 1.6 L5.8 3.1 Z" fill="#acacac"/></svg></div><div class="ev" style="height:24px;background:#f2ecfb"><div class="t" style="top:1.6px">8:45-9:00</div><div class="tl" style="top:12px"><span class="lb" style="background:#a98bd5;width:16.5px">朝礼</span>全体朝礼</div><svg class="a" style="left:58.4px;top:13.4px" width="9" height="7" viewBox="0 0 9 7"><path d="M1.2 1.8 C0.5 4.6 1.8 6 4.2 6 C6.6 6 8 5 7.8 3.2 C7.6 1.6 6.6 1.3 5.2 1.5" fill="none" stroke="#acacac" stroke-width="1.3"/><path d="M5.8 0 L3.5 1.6 L5.8 3.1 Z" fill="#acacac"/></svg><svg class="a" style="left:67.4px;top:12px" width="11" height="10" viewBox="0 0 11 10"><rect x="0.6" y="0.6" width="7.4" height="5.4" fill="#f0f0f0" stroke="#858585" stroke-width="1"/><path d="M2 1.8 L3.8 3.4" stroke="#aaa" stroke-width="0.6"/><circle cx="8.4" cy="4" r="1.3" fill="#4a98d6"/><path d="M6.6 8.6 Q6.8 5.6 8.4 5.6 Q10.2 5.6 10.4 8.6 Z" fill="#4a98d6"/><circle cx="5.4" cy="5.9" r="1.5" fill="#6cc47a"/><path d="M2.6 9.8 Q2.9 7.4 5.4 7.4 Q7.9 7.4 8.2 9.8 Z" fill="#6cc47a"/></svg></div><div style="position:relative;height:9px;margin-top:7px"><svg class="a" style="left:3.4px;top:0px" width="9" height="9" viewBox="0 0 9 9"><path d="M3.4 0.8 H5.6 V3.4 H8.2 V5.6 H5.6 V8.2 H3.4 V5.6 H0.8 V3.4 H3.4 Z" fill="#72c472" stroke="#56ad56" stroke-width="0.7" stroke-linejoin="round"/></svg><svg class="a" style="left:18.6px;top:0px" width="10" height="9" viewBox="0 0 10 9"><path d="M0.7 1.4 H3.8 L4.6 0.6 L5.4 1.4 H8.6 V8.2 H0.7 Z" fill="#fbfbfb" stroke="#ababab" stroke-width="0.8"/><path d="M4.9 6.1 H9.3 M7.1 3.9 V8.6" stroke="#3fb43f" stroke-width="1.1"/></svg></div></div>
<div class="cell" style="left:779.5px;top:112.5px;width:105.40000000000002px"><div class="ev" style="height:14px;background:#fde9e9"><div class="dot" style="top:6px"></div><div class="a" style="left:6.5px;top:2.2px"><span class="lb" style="background:#e8363a;width:42px">石田第1工場</span></div><svg class="a" style="left:50.2px;top:3.2px" width="9" height="7" viewBox="0 0 9 7"><path d="M1.2 1.8 C0.5 4.6 1.8 6 4.2 6 C6.6 6 8 5 7.8 3.2 C7.6 1.6 6.6 1.3 5.2 1.5" fill="none" stroke="#acacac" stroke-width="1.3"/><path d="M5.8 0 L3.5 1.6 L5.8 3.1 Z" fill="#acacac"/></svg></div><div class="ev" style="height:24px;background:#f2ecfb"><div class="t" style="top:1.6px">8:45-9:00</div><div class="tl" style="top:12px"><span class="lb" style="background:#a98bd5;width:16.5px">朝礼</span>全体朝礼</div><svg class="a" style="left:58.4px;top:13.4px" width="9" height="7" viewBox="0 0 9 7"><path d="M1.2 1.8 C0.5 4.6 1.8 6 4.2 6 C6.6 6 8 5 7.8 3.2 C7.6 1.6 6.6 1.3 5.2 1.5" fill="none" stroke="#acacac" stroke-width="1.3"/><path d="M5.8 0 L3.5 1.6 L5.8 3.1 Z" fill="#acacac"/></svg><svg class="a" style="left:67.4px;top:12px" width="11" height="10" viewBox="0 0 11 10"><rect x="0.6" y="0.6" width="7.4" height="5.4" fill="#f0f0f0" stroke="#858585" stroke-width="1"/><path d="M2 1.8 L3.8 3.4" stroke="#aaa" stroke-width="0.6"/><circle cx="8.4" cy="4" r="1.3" fill="#4a98d6"/><path d="M6.6 8.6 Q6.8 5.6 8.4 5.6 Q10.2 5.6 10.4 8.6 Z" fill="#4a98d6"/><circle cx="5.4" cy="5.9" r="1.5" fill="#6cc47a"/><path d="M2.6 9.8 Q2.9 7.4 5.4 7.4 Q7.9 7.4 8.2 9.8 Z" fill="#6cc47a"/></svg></div><div class="ev" style="height:24px;background:#eaf6fd"><div class="t" style="top:1.6px">15:00-18:00</div><div class="tl" style="top:12px"><span class="lb" style="background:#5db1e6;width:16.5px">外出</span>直帰予定</div></div><div style="position:relative;height:9px;margin-top:7px"><svg class="a" style="left:3.4px;top:0px" width="9" height="9" viewBox="0 0 9 9"><path d="M3.4 0.8 H5.6 V3.4 H8.2 V5.6 H5.6 V8.2 H3.4 V5.6 H0.8 V3.4 H3.4 Z" fill="#72c472" stroke="#56ad56" stroke-width="0.7" stroke-linejoin="round"/></svg><svg class="a" style="left:18.6px;top:0px" width="10" height="9" viewBox="0 0 10 9"><path d="M0.7 1.4 H3.8 L4.6 0.6 L5.4 1.4 H8.6 V8.2 H0.7 Z" fill="#fbfbfb" stroke="#ababab" stroke-width="0.8"/><path d="M4.9 6.1 H9.3 M7.1 3.9 V8.6" stroke="#3fb43f" stroke-width="1.1"/></svg></div></div>
<div class="cell" style="left:139.9px;top:208.8px;width:105.3px"><div class="ev" style="height:14px;background:#fdf4e5"><div class="dot" style="top:6px"></div><div class="a" style="left:6.5px;top:2.2px"><span class="lb" style="background:#ee8a1a;width:31px">本社工場</span></div><svg class="a" style="left:39.2px;top:3.2px" width="9" height="7" viewBox="0 0 9 7"><path d="M1.2 1.8 C0.5 4.6 1.8 6 4.2 6 C6.6 6 8 5 7.8 3.2 C7.6 1.6 6.6 1.3 5.2 1.5" fill="none" stroke="#acacac" stroke-width="1.3"/><path d="M5.8 0 L3.5 1.6 L5.8 3.1 Z" fill="#acacac"/></svg></div><div class="ev" style="height:24px;background:#f2ecfb"><div class="t" style="top:1.6px">8:45-9:00</div><div class="tl" style="top:12px"><span class="lb" style="background:#a98bd5;width:16.5px">朝礼</span>全体朝礼</div><svg class="a" style="left:58.4px;top:13.4px" width="9" height="7" viewBox="0 0 9 7"><path d="M1.2 1.8 C0.5 4.6 1.8 6 4.2 6 C6.6 6 8 5 7.8 3.2 C7.6 1.6 6.6 1.3 5.2 1.5" fill="none" stroke="#acacac" stroke-width="1.3"/><path d="M5.8 0 L3.5 1.6 L5.8 3.1 Z" fill="#acacac"/></svg><svg class="a" style="left:67.4px;top:12px" width="11" height="10" viewBox="0 0 11 10"><rect x="0.6" y="0.6" width="7.4" height="5.4" fill="#f0f0f0" stroke="#858585" stroke-width="1"/><path d="M2 1.8 L3.8 3.4" stroke="#aaa" stroke-width="0.6"/><circle cx="8.4" cy="4" r="1.3" fill="#4a98d6"/><path d="M6.6 8.6 Q6.8 5.6 8.4 5.6 Q10.2 5.6 10.4 8.6 Z" fill="#4a98d6"/><circle cx="5.4" cy="5.9" r="1.5" fill="#6cc47a"/><path d="M2.6 9.8 Q2.9 7.4 5.4 7.4 Q7.9 7.4 8.2 9.8 Z" fill="#6cc47a"/></svg></div><div class="ev" style="height:33.5px;background:#fdeeee"><div class="t" style="top:1.6px">13:00-18:00</div><div class="tl" style="top:12px"><span class="lb" style="background:#ee929d;width:42px">石田第2工場</span>お手伝いに行</div><div class="tl" style="top:21.5px">きます</div></div><div style="position:relative;height:9px;margin-top:7px"><svg class="a" style="left:3.4px;top:0px" width="9" height="9" viewBox="0 0 9 9"><path d="M3.4 0.8 H5.6 V3.4 H8.2 V5.6 H5.6 V8.2 H3.4 V5.6 H0.8 V3.4 H3.4 Z" fill="#72c472" stroke="#56ad56" stroke-width="0.7" stroke-linejoin="round"/></svg><svg class="a" style="left:18.6px;top:0px" width="10" height="9" viewBox="0 0 10 9"><path d="M0.7 1.4 H3.8 L4.6 0.6 L5.4 1.4 H8.6 V8.2 H0.7 Z" fill="#fbfbfb" stroke="#ababab" stroke-width="0.8"/><path d="M4.9 6.1 H9.3 M7.1 3.9 V8.6" stroke="#3fb43f" stroke-width="1.1"/></svg></div></div>
<div class="cell" style="left:246.4px;top:208.8px;width:105.60000000000001px"><div class="ev" style="height:14px;background:#fdf4e5"><div class="dot" style="top:6px"></div><div class="a" style="left:6.5px;top:2.2px"><span class="lb" style="background:#ee8a1a;width:31px">本社工場</span></div><svg class="a" style="left:39.2px;top:3.2px" width="9" height="7" viewBox="0 0 9 7"><path d="M1.2 1.8 C0.5 4.6 1.8 6 4.2 6 C6.6 6 8 5 7.8 3.2 C7.6 1.6 6.6 1.3 5.2 1.5" fill="none" stroke="#acacac" stroke-width="1.3"/><path d="M5.8 0 L3.5 1.6 L5.8 3.1 Z" fill="#acacac"/></svg></div><div class="ev" style="height:24px;background:#f2ecfb"><div class="t" style="top:1.6px">8:45-9:00</div><div class="tl" style="top:12px"><span class="lb" style="background:#a98bd5;width:16.5px">朝礼</span>全体朝礼</div><svg class="a" style="left:58.4px;top:13.4px" width="9" height="7" viewBox="0 0 9 7"><path d="M1.2 1.8 C0.5 4.6 1.8 6 4.2 6 C6.6 6 8 5 7.8 3.2 C7.6 1.6 6.6 1.3 5.2 1.5" fill="none" stroke="#acacac" stroke-width="1.3"/><path d="M5.8 0 L3.5 1.6 L5.8 3.1 Z" fill="#acacac"/></svg><svg class="a" style="left:67.4px;top:12px" width="11" height="10" viewBox="0 0 11 10"><rect x="0.6" y="0.6" width="7.4" height="5.4" fill="#f0f0f0" stroke="#858585" stroke-width="1"/><path d="M2 1.8 L3.8 3.4" stroke="#aaa" stroke-width="0.6"/><circle cx="8.4" cy="4" r="1.3" fill="#4a98d6"/><path d="M6.6 8.6 Q6.8 5.6 8.4 5.6 Q10.2 5.6 10.4 8.6 Z" fill="#4a98d6"/><circle cx="5.4" cy="5.9" r="1.5" fill="#6cc47a"/><path d="M2.6 9.8 Q2.9 7.4 5.4 7.4 Q7.9 7.4 8.2 9.8 Z" fill="#6cc47a"/></svg></div><div class="ev" style="height:34px;background:#e4effb"><div class="t" style="top:1.6px">17:00-18:00</div><div class="tl" style="top:12px"><span class="lb" style="background:#2f7ed6;width:16.5px">会議</span>製造部ミーティング</div><svg class="a" style="left:6.4px;top:22.5px" width="9" height="7" viewBox="0 0 9 7"><path d="M1.2 1.8 C0.5 4.6 1.8 6 4.2 6 C6.6 6 8 5 7.8 3.2 C7.6 1.6 6.6 1.3 5.2 1.5" fill="none" stroke="#acacac" stroke-width="1.3"/><path d="M5.8 0 L3.5 1.6 L5.8 3.1 Z" fill="#acacac"/></svg><svg class="a" style="left:15.4px;top:21px" width="11" height="10" viewBox="0 0 11 10"><rect x="0.6" y="0.6" width="7.4" height="5.4" fill="#f0f0f0" stroke="#858585" stroke-width="1"/><path d="M2 1.8 L3.8 3.4" stroke="#aaa" stroke-width="0.6"/><circle cx="8.4" cy="4" r="1.3" fill="#4a98d6"/><path d="M6.6 8.6 Q6.8 5.6 8.4 5.6 Q10.2 5.6 10.4 8.6 Z" fill="#4a98d6"/><circle cx="5.4" cy="5.9" r="1.5" fill="#6cc47a"/><path d="M2.6 9.8 Q2.9 7.4 5.4 7.4 Q7.9 7.4 8.2 9.8 Z" fill="#6cc47a"/></svg></div><div style="position:relative;height:9px;margin-top:7px"><svg class="a" style="left:3.4px;top:0px" width="9" height="9" viewBox="0 0 9 9"><path d="M3.4 0.8 H5.6 V3.4 H8.2 V5.6 H5.6 V8.2 H3.4 V5.6 H0.8 V3.4 H3.4 Z" fill="#72c472" stroke="#56ad56" stroke-width="0.7" stroke-linejoin="round"/></svg><svg class="a" style="left:18.6px;top:0px" width="10" height="9" viewBox="0 0 10 9"><path d="M0.7 1.4 H3.8 L4.6 0.6 L5.4 1.4 H8.6 V8.2 H0.7 Z" fill="#fbfbfb" stroke="#ababab" stroke-width="0.8"/><path d="M4.9 6.1 H9.3 M7.1 3.9 V8.6" stroke="#3fb43f" stroke-width="1.1"/></svg></div></div>
<div class="cell" style="left:353.2px;top:208.8px;width:104.99999999999999px"><div class="ev" style="height:11px;overflow:visible"><svg class="a" style="left:2.2px;top:1.2px" width="9" height="9" viewBox="0 0 9 9"><rect x="0.5" y="0.5" width="8" height="6.8" rx="0.8" fill="#c9c9c9"/><rect x="0.5" y="0.5" width="8" height="1.6" fill="#4a90d0"/><rect x="1" y="2.4" width="7" height="1.8" fill="#fbf6ea"/><rect x="1" y="5.6" width="1.3" height="1" fill="#e8b840"/><rect x="6.7" y="5.6" width="1.3" height="1" fill="#e8b840"/><rect x="1" y="7.2" width="1.8" height="1.4" fill="#444"/><rect x="6.2" y="7.2" width="1.8" height="1.4" fill="#444"/></svg><div class="a" style="left:12.9px;top:0.5px;font-size:7.8px;color:#2f6aa9;white-space:nowrap;line-height:9px;-webkit-text-stroke:0.15px #2f6aa9">受注管理(1)</div></div><div class="ev" style="height:14px;background:#fdf4e5"><div class="dot" style="top:6px"></div><div class="a" style="left:6.5px;top:2.2px"><span class="lb" style="background:#ee8a1a;width:31px">本社工場</span></div><svg class="a" style="left:39.2px;top:3.2px" width="9" height="7" viewBox="0 0 9 7"><path d="M1.2 1.8 C0.5 4.6 1.8 6 4.2 6 C6.6 6 8 5 7.8 3.2 C7.6 1.6 6.6 1.3 5.2 1.5" fill="none" stroke="#acacac" stroke-width="1.3"/><path d="M5.8 0 L3.5 1.6 L5.8 3.1 Z" fill="#acacac"/></svg></div><div class="ev" style="height:24px;background:#f2ecfb"><div class="t" style="top:1.6px">8:45-9:00</div><div class="tl" style="top:12px"><span class="lb" style="background:#a98bd5;width:16.5px">朝礼</span>全体朝礼</div><svg class="a" style="left:58.4px;top:13.4px" width="9" height="7" viewBox="0 0 9 7"><path d="M1.2 1.8 C0.5 4.6 1.8 6 4.2 6 C6.6 6 8 5 7.8 3.2 C7.6 1.6 6.6 1.3 5.2 1.5" fill="none" stroke="#acacac" stroke-width="1.3"/><path d="M5.8 0 L3.5 1.6 L5.8 3.1 Z" fill="#acacac"/></svg><svg class="a" style="left:67.4px;top:12px" width="11" height="10" viewBox="0 0 11 10"><rect x="0.6" y="0.6" width="7.4" height="5.4" fill="#f0f0f0" stroke="#858585" stroke-width="1"/><path d="M2 1.8 L3.8 3.4" stroke="#aaa" stroke-width="0.6"/><circle cx="8.4" cy="4" r="1.3" fill="#4a98d6"/><path d="M6.6 8.6 Q6.8 5.6 8.4 5.6 Q10.2 5.6 10.4 8.6 Z" fill="#4a98d6"/><circle cx="5.4" cy="5.9" r="1.5" fill="#6cc47a"/><path d="M2.6 9.8 Q2.9 7.4 5.4 7.4 Q7.9 7.4 8.2 9.8 Z" fill="#6cc47a"/></svg></div><div class="ev" style="height:33.5px;background:#fdeeee"><div class="t" style="top:1.6px">13:00-18:00</div><div class="tl" style="top:12px"><span class="lb" style="background:#ee929d;width:42px">石田第2工場</span>お手伝いに行</div><div class="tl" style="top:21.5px">きます</div></div><div style="position:relative;height:9px;margin-top:7px"><svg class="a" style="left:3.4px;top:0px" width="9" height="9" viewBox="0 0 9 9"><path d="M3.4 0.8 H5.6 V3.4 H8.2 V5.6 H5.6 V8.2 H3.4 V5.6 H0.8 V3.4 H3.4 Z" fill="#72c472" stroke="#56ad56" stroke-width="0.7" stroke-linejoin="round"/></svg><svg class="a" style="left:18.6px;top:0px" width="10" height="9" viewBox="0 0 10 9"><path d="M0.7 1.4 H3.8 L4.6 0.6 L5.4 1.4 H8.6 V8.2 H0.7 Z" fill="#fbfbfb" stroke="#ababab" stroke-width="0.8"/><path d="M4.9 6.1 H9.3 M7.1 3.9 V8.6" stroke="#3fb43f" stroke-width="1.1"/></svg></div></div>
<div class="cell" style="left:459.4px;top:208.8px;width:105.59999999999995px"><div style="position:relative;height:9px;margin-top:6.5px"><svg class="a" style="left:3.4px;top:0px" width="9" height="9" viewBox="0 0 9 9"><path d="M3.4 0.8 H5.6 V3.4 H8.2 V5.6 H5.6 V8.2 H3.4 V5.6 H0.8 V3.4 H3.4 Z" fill="#72c472" stroke="#56ad56" stroke-width="0.7" stroke-linejoin="round"/></svg><svg class="a" style="left:18.6px;top:0px" width="10" height="9" viewBox="0 0 10 9"><path d="M0.7 1.4 H3.8 L4.6 0.6 L5.4 1.4 H8.6 V8.2 H0.7 Z" fill="#fbfbfb" stroke="#ababab" stroke-width="0.8"/><path d="M4.9 6.1 H9.3 M7.1 3.9 V8.6" stroke="#3fb43f" stroke-width="1.1"/></svg></div></div>
<div class="cell" style="left:566.1999999999999px;top:208.8px;width:104.90000000000002px"><div style="position:relative;height:9px;margin-top:6.5px"><svg class="a" style="left:3.4px;top:0px" width="9" height="9" viewBox="0 0 9 9"><path d="M3.4 0.8 H5.6 V3.4 H8.2 V5.6 H5.6 V8.2 H3.4 V5.6 H0.8 V3.4 H3.4 Z" fill="#72c472" stroke="#56ad56" stroke-width="0.7" stroke-linejoin="round"/></svg><svg class="a" style="left:18.6px;top:0px" width="10" height="9" viewBox="0 0 10 9"><path d="M0.7 1.4 H3.8 L4.6 0.6 L5.4 1.4 H8.6 V8.2 H0.7 Z" fill="#fbfbfb" stroke="#ababab" stroke-width="0.8"/><path d="M4.9 6.1 H9.3 M7.1 3.9 V8.6" stroke="#3fb43f" stroke-width="1.1"/></svg></div></div>
<div class="cell" style="left:672.3px;top:208.8px;width:106.00000000000004px"><div class="ev" style="height:24px;background:#f2ecfb"><div class="t" style="top:1.6px">8:45-9:00</div><div class="tl" style="top:12px"><span class="lb" style="background:#a98bd5;width:16.5px">朝礼</span>全体朝礼</div><svg class="a" style="left:58.4px;top:13.4px" width="9" height="7" viewBox="0 0 9 7"><path d="M1.2 1.8 C0.5 4.6 1.8 6 4.2 6 C6.6 6 8 5 7.8 3.2 C7.6 1.6 6.6 1.3 5.2 1.5" fill="none" stroke="#acacac" stroke-width="1.3"/><path d="M5.8 0 L3.5 1.6 L5.8 3.1 Z" fill="#acacac"/></svg><svg class="a" style="left:67.4px;top:12px" width="11" height="10" viewBox="0 0 11 10"><rect x="0.6" y="0.6" width="7.4" height="5.4" fill="#f0f0f0" stroke="#858585" stroke-width="1"/><path d="M2 1.8 L3.8 3.4" stroke="#aaa" stroke-width="0.6"/><circle cx="8.4" cy="4" r="1.3" fill="#4a98d6"/><path d="M6.6 8.6 Q6.8 5.6 8.4 5.6 Q10.2 5.6 10.4 8.6 Z" fill="#4a98d6"/><circle cx="5.4" cy="5.9" r="1.5" fill="#6cc47a"/><path d="M2.6 9.8 Q2.9 7.4 5.4 7.4 Q7.9 7.4 8.2 9.8 Z" fill="#6cc47a"/></svg></div><div class="ev" style="height:24px;background:#fdeeee"><div class="t" style="top:1.6px">9:00-18:00</div><div class="tl" style="top:12px"><span class="lb" style="background:#ee929d;width:42px">石田第2工場</span>終日</div></div><div style="position:relative;height:9px;margin-top:7px"><svg class="a" style="left:3.4px;top:0px" width="9" height="9" viewBox="0 0 9 9"><path d="M3.4 0.8 H5.6 V3.4 H8.2 V5.6 H5.6 V8.2 H3.4 V5.6 H0.8 V3.4 H3.4 Z" fill="#72c472" stroke="#56ad56" stroke-width="0.7" stroke-linejoin="round"/></svg><svg class="a" style="left:18.6px;top:0px" width="10" height="9" viewBox="0 0 10 9"><path d="M0.7 1.4 H3.8 L4.6 0.6 L5.4 1.4 H8.6 V8.2 H0.7 Z" fill="#fbfbfb" stroke="#ababab" stroke-width="0.8"/><path d="M4.9 6.1 H9.3 M7.1 3.9 V8.6" stroke="#3fb43f" stroke-width="1.1"/></svg></div></div>
<div class="cell" style="left:779.5px;top:208.8px;width:105.40000000000002px"><div class="ev" style="height:14px;background:#fdf4e5"><div class="dot" style="top:6px"></div><div class="a" style="left:6.5px;top:2.2px"><span class="lb" style="background:#ee8a1a;width:31px">本社工場</span></div><svg class="a" style="left:39.2px;top:3.2px" width="9" height="7" viewBox="0 0 9 7"><path d="M1.2 1.8 C0.5 4.6 1.8 6 4.2 6 C6.6 6 8 5 7.8 3.2 C7.6 1.6 6.6 1.3 5.2 1.5" fill="none" stroke="#acacac" stroke-width="1.3"/><path d="M5.8 0 L3.5 1.6 L5.8 3.1 Z" fill="#acacac"/></svg></div><div class="ev" style="height:24px;background:#f2ecfb"><div class="t" style="top:1.6px">8:45-9:00</div><div class="tl" style="top:12px"><span class="lb" style="background:#a98bd5;width:16.5px">朝礼</span>全体朝礼</div><svg class="a" style="left:58.4px;top:13.4px" width="9" height="7" viewBox="0 0 9 7"><path d="M1.2 1.8 C0.5 4.6 1.8 6 4.2 6 C6.6 6 8 5 7.8 3.2 C7.6 1.6 6.6 1.3 5.2 1.5" fill="none" stroke="#acacac" stroke-width="1.3"/><path d="M5.8 0 L3.5 1.6 L5.8 3.1 Z" fill="#acacac"/></svg><svg class="a" style="left:67.4px;top:12px" width="11" height="10" viewBox="0 0 11 10"><rect x="0.6" y="0.6" width="7.4" height="5.4" fill="#f0f0f0" stroke="#858585" stroke-width="1"/><path d="M2 1.8 L3.8 3.4" stroke="#aaa" stroke-width="0.6"/><circle cx="8.4" cy="4" r="1.3" fill="#4a98d6"/><path d="M6.6 8.6 Q6.8 5.6 8.4 5.6 Q10.2 5.6 10.4 8.6 Z" fill="#4a98d6"/><circle cx="5.4" cy="5.9" r="1.5" fill="#6cc47a"/><path d="M2.6 9.8 Q2.9 7.4 5.4 7.4 Q7.9 7.4 8.2 9.8 Z" fill="#6cc47a"/></svg></div><div style="position:relative;height:9px;margin-top:7px"><svg class="a" style="left:3.4px;top:0px" width="9" height="9" viewBox="0 0 9 9"><path d="M3.4 0.8 H5.6 V3.4 H8.2 V5.6 H5.6 V8.2 H3.4 V5.6 H0.8 V3.4 H3.4 Z" fill="#72c472" stroke="#56ad56" stroke-width="0.7" stroke-linejoin="round"/></svg><svg class="a" style="left:18.6px;top:0px" width="10" height="9" viewBox="0 0 10 9"><path d="M0.7 1.4 H3.8 L4.6 0.6 L5.4 1.4 H8.6 V8.2 H0.7 Z" fill="#fbfbfb" stroke="#ababab" stroke-width="0.8"/><path d="M4.9 6.1 H9.3 M7.1 3.9 V8.6" stroke="#3fb43f" stroke-width="1.1"/></svg></div></div>
<div class="cell" style="left:139.9px;top:317.0px;width:105.3px"><div class="ev" style="height:11px;overflow:visible"><svg class="a" style="left:2.2px;top:1.2px" width="9" height="9" viewBox="0 0 9 9"><rect x="0.5" y="0.5" width="8" height="6.8" rx="0.8" fill="#c9c9c9"/><rect x="0.5" y="0.5" width="8" height="1.6" fill="#4a90d0"/><rect x="1" y="2.4" width="7" height="1.8" fill="#fbf6ea"/><rect x="1" y="5.6" width="1.3" height="1" fill="#e8b840"/><rect x="6.7" y="5.6" width="1.3" height="1" fill="#e8b840"/><rect x="1" y="7.2" width="1.8" height="1.4" fill="#444"/><rect x="6.2" y="7.2" width="1.8" height="1.4" fill="#444"/></svg><div class="a" style="left:12.9px;top:0.5px;font-size:7.8px;color:#2f6aa9;white-space:nowrap;line-height:9px;-webkit-text-stroke:0.15px #2f6aa9">受注管理(1)</div></div><div class="ev" style="height:14px;background:#fde9e9"><div class="dot" style="top:6px"></div><div class="a" style="left:6.5px;top:2.2px"><span class="lb" style="background:#e8363a;width:42px">石田第1工場</span></div><svg class="a" style="left:50.2px;top:3.2px" width="9" height="7" viewBox="0 0 9 7"><path d="M1.2 1.8 C0.5 4.6 1.8 6 4.2 6 C6.6 6 8 5 7.8 3.2 C7.6 1.6 6.6 1.3 5.2 1.5" fill="none" stroke="#acacac" stroke-width="1.3"/><path d="M5.8 0 L3.5 1.6 L5.8 3.1 Z" fill="#acacac"/></svg></div><div class="ev" style="height:24px;background:#f2ecfb"><div class="t" style="top:1.6px">8:45-9:00</div><div class="tl" style="top:12px"><span class="lb" style="background:#a98bd5;width:16.5px">朝礼</span>全体朝礼</div><svg class="a" style="left:58.4px;top:13.4px" width="9" height="7" viewBox="0 0 9 7"><path d="M1.2 1.8 C0.5 4.6 1.8 6 4.2 6 C6.6 6 8 5 7.8 3.2 C7.6 1.6 6.6 1.3 5.2 1.5" fill="none" stroke="#acacac" stroke-width="1.3"/><path d="M5.8 0 L3.5 1.6 L5.8 3.1 Z" fill="#acacac"/></svg><svg class="a" style="left:67.4px;top:12px" width="11" height="10" viewBox="0 0 11 10"><rect x="0.6" y="0.6" width="7.4" height="5.4" fill="#f0f0f0" stroke="#858585" stroke-width="1"/><path d="M2 1.8 L3.8 3.4" stroke="#aaa" stroke-width="0.6"/><circle cx="8.4" cy="4" r="1.3" fill="#4a98d6"/><path d="M6.6 8.6 Q6.8 5.6 8.4 5.6 Q10.2 5.6 10.4 8.6 Z" fill="#4a98d6"/><circle cx="5.4" cy="5.9" r="1.5" fill="#6cc47a"/><path d="M2.6 9.8 Q2.9 7.4 5.4 7.4 Q7.9 7.4 8.2 9.8 Z" fill="#6cc47a"/></svg></div><div style="position:relative;height:9px;margin-top:7px"><svg class="a" style="left:3.4px;top:0px" width="9" height="9" viewBox="0 0 9 9"><path d="M3.4 0.8 H5.6 V3.4 H8.2 V5.6 H5.6 V8.2 H3.4 V5.6 H0.8 V3.4 H3.4 Z" fill="#72c472" stroke="#56ad56" stroke-width="0.7" stroke-linejoin="round"/></svg><svg class="a" style="left:18.6px;top:0px" width="10" height="9" viewBox="0 0 10 9"><path d="M0.7 1.4 H3.8 L4.6 0.6 L5.4 1.4 H8.6 V8.2 H0.7 Z" fill="#fbfbfb" stroke="#ababab" stroke-width="0.8"/><path d="M4.9 6.1 H9.3 M7.1 3.9 V8.6" stroke="#3fb43f" stroke-width="1.1"/></svg></div></div>
<div class="cell" style="left:246.4px;top:317.0px;width:105.60000000000001px"><div class="ev" style="height:14px;background:#fde9e9"><div class="dot" style="top:6px"></div><div class="a" style="left:6.5px;top:2.2px"><span class="lb" style="background:#e8363a;width:42px">石田第1工場</span></div><svg class="a" style="left:50.2px;top:3.2px" width="9" height="7" viewBox="0 0 9 7"><path d="M1.2 1.8 C0.5 4.6 1.8 6 4.2 6 C6.6 6 8 5 7.8 3.2 C7.6 1.6 6.6 1.3 5.2 1.5" fill="none" stroke="#acacac" stroke-width="1.3"/><path d="M5.8 0 L3.5 1.6 L5.8 3.1 Z" fill="#acacac"/></svg></div><div class="ev" style="height:24px;background:#f2ecfb"><div class="t" style="top:1.6px">8:45-9:00</div><div class="tl" style="top:12px"><span class="lb" style="background:#a98bd5;width:16.5px">朝礼</span>全体朝礼</div><svg class="a" style="left:58.4px;top:13.4px" width="9" height="7" viewBox="0 0 9 7"><path d="M1.2 1.8 C0.5 4.6 1.8 6 4.2 6 C6.6 6 8 5 7.8 3.2 C7.6 1.6 6.6 1.3 5.2 1.5" fill="none" stroke="#acacac" stroke-width="1.3"/><path d="M5.8 0 L3.5 1.6 L5.8 3.1 Z" fill="#acacac"/></svg><svg class="a" style="left:67.4px;top:12px" width="11" height="10" viewBox="0 0 11 10"><rect x="0.6" y="0.6" width="7.4" height="5.4" fill="#f0f0f0" stroke="#858585" stroke-width="1"/><path d="M2 1.8 L3.8 3.4" stroke="#aaa" stroke-width="0.6"/><circle cx="8.4" cy="4" r="1.3" fill="#4a98d6"/><path d="M6.6 8.6 Q6.8 5.6 8.4 5.6 Q10.2 5.6 10.4 8.6 Z" fill="#4a98d6"/><circle cx="5.4" cy="5.9" r="1.5" fill="#6cc47a"/><path d="M2.6 9.8 Q2.9 7.4 5.4 7.4 Q7.9 7.4 8.2 9.8 Z" fill="#6cc47a"/></svg></div><div class="ev" style="height:34px;background:#e4effb"><div class="t" style="top:1.6px">17:00-18:00</div><div class="tl" style="top:12px"><span class="lb" style="background:#2f7ed6;width:16.5px">会議</span>製造部ミーティング</div><svg class="a" style="left:6.4px;top:22.5px" width="9" height="7" viewBox="0 0 9 7"><path d="M1.2 1.8 C0.5 4.6 1.8 6 4.2 6 C6.6 6 8 5 7.8 3.2 C7.6 1.6 6.6 1.3 5.2 1.5" fill="none" stroke="#acacac" stroke-width="1.3"/><path d="M5.8 0 L3.5 1.6 L5.8 3.1 Z" fill="#acacac"/></svg><svg class="a" style="left:15.4px;top:21px" width="11" height="10" viewBox="0 0 11 10"><rect x="0.6" y="0.6" width="7.4" height="5.4" fill="#f0f0f0" stroke="#858585" stroke-width="1"/><path d="M2 1.8 L3.8 3.4" stroke="#aaa" stroke-width="0.6"/><circle cx="8.4" cy="4" r="1.3" fill="#4a98d6"/><path d="M6.6 8.6 Q6.8 5.6 8.4 5.6 Q10.2 5.6 10.4 8.6 Z" fill="#4a98d6"/><circle cx="5.4" cy="5.9" r="1.5" fill="#6cc47a"/><path d="M2.6 9.8 Q2.9 7.4 5.4 7.4 Q7.9 7.4 8.2 9.8 Z" fill="#6cc47a"/></svg></div><div style="position:relative;height:9px;margin-top:7px"><svg class="a" style="left:3.4px;top:0px" width="9" height="9" viewBox="0 0 9 9"><path d="M3.4 0.8 H5.6 V3.4 H8.2 V5.6 H5.6 V8.2 H3.4 V5.6 H0.8 V3.4 H3.4 Z" fill="#72c472" stroke="#56ad56" stroke-width="0.7" stroke-linejoin="round"/></svg><svg class="a" style="left:18.6px;top:0px" width="10" height="9" viewBox="0 0 10 9"><path d="M0.7 1.4 H3.8 L4.6 0.6 L5.4 1.4 H8.6 V8.2 H0.7 Z" fill="#fbfbfb" stroke="#ababab" stroke-width="0.8"/><path d="M4.9 6.1 H9.3 M7.1 3.9 V8.6" stroke="#3fb43f" stroke-width="1.1"/></svg></div></div>
<div class="cell" style="left:353.2px;top:317.0px;width:104.99999999999999px"><div class="ev" style="height:14px;background:#fde9e9"><div class="dot" style="top:6px"></div><div class="a" style="left:6.5px;top:2.2px"><span class="lb" style="background:#e8363a;width:42px">石田第1工場</span></div><svg class="a" style="left:50.2px;top:3.2px" width="9" height="7" viewBox="0 0 9 7"><path d="M1.2 1.8 C0.5 4.6 1.8 6 4.2 6 C6.6 6 8 5 7.8 3.2 C7.6 1.6 6.6 1.3 5.2 1.5" fill="none" stroke="#acacac" stroke-width="1.3"/><path d="M5.8 0 L3.5 1.6 L5.8 3.1 Z" fill="#acacac"/></svg></div><div class="ev" style="height:24px;background:#f2ecfb"><div class="t" style="top:1.6px">8:45-9:00</div><div class="tl" style="top:12px"><span class="lb" style="background:#a98bd5;width:16.5px">朝礼</span>全体朝礼</div><svg class="a" style="left:58.4px;top:13.4px" width="9" height="7" viewBox="0 0 9 7"><path d="M1.2 1.8 C0.5 4.6 1.8 6 4.2 6 C6.6 6 8 5 7.8 3.2 C7.6 1.6 6.6 1.3 5.2 1.5" fill="none" stroke="#acacac" stroke-width="1.3"/><path d="M5.8 0 L3.5 1.6 L5.8 3.1 Z" fill="#acacac"/></svg><svg class="a" style="left:67.4px;top:12px" width="11" height="10" viewBox="0 0 11 10"><rect x="0.6" y="0.6" width="7.4" height="5.4" fill="#f0f0f0" stroke="#858585" stroke-width="1"/><path d="M2 1.8 L3.8 3.4" stroke="#aaa" stroke-width="0.6"/><circle cx="8.4" cy="4" r="1.3" fill="#4a98d6"/><path d="M6.6 8.6 Q6.8 5.6 8.4 5.6 Q10.2 5.6 10.4 8.6 Z" fill="#4a98d6"/><circle cx="5.4" cy="5.9" r="1.5" fill="#6cc47a"/><path d="M2.6 9.8 Q2.9 7.4 5.4 7.4 Q7.9 7.4 8.2 9.8 Z" fill="#6cc47a"/></svg></div><div style="position:relative;height:9px;margin-top:7px"><svg class="a" style="left:3.4px;top:0px" width="9" height="9" viewBox="0 0 9 9"><path d="M3.4 0.8 H5.6 V3.4 H8.2 V5.6 H5.6 V8.2 H3.4 V5.6 H0.8 V3.4 H3.4 Z" fill="#72c472" stroke="#56ad56" stroke-width="0.7" stroke-linejoin="round"/></svg><svg class="a" style="left:18.6px;top:0px" width="10" height="9" viewBox="0 0 10 9"><path d="M0.7 1.4 H3.8 L4.6 0.6 L5.4 1.4 H8.6 V8.2 H0.7 Z" fill="#fbfbfb" stroke="#ababab" stroke-width="0.8"/><path d="M4.9 6.1 H9.3 M7.1 3.9 V8.6" stroke="#3fb43f" stroke-width="1.1"/></svg></div></div>
<div class="cell" style="left:459.4px;top:317.0px;width:105.59999999999995px"><div style="position:relative;height:9px;margin-top:5px"><svg class="a" style="left:3.4px;top:0px" width="9" height="9" viewBox="0 0 9 9"><path d="M3.4 0.8 H5.6 V3.4 H8.2 V5.6 H5.6 V8.2 H3.4 V5.6 H0.8 V3.4 H3.4 Z" fill="#72c472" stroke="#56ad56" stroke-width="0.7" stroke-linejoin="round"/></svg><svg class="a" style="left:18.6px;top:0px" width="10" height="9" viewBox="0 0 10 9"><path d="M0.7 1.4 H3.8 L4.6 0.6 L5.4 1.4 H8.6 V8.2 H0.7 Z" fill="#fbfbfb" stroke="#ababab" stroke-width="0.8"/><path d="M4.9 6.1 H9.3 M7.1 3.9 V8.6" stroke="#3fb43f" stroke-width="1.1"/></svg></div></div>
<div class="cell" style="left:566.1999999999999px;top:317.0px;width:104.90000000000002px"><div style="position:relative;height:9px;margin-top:5px"><svg class="a" style="left:3.4px;top:0px" width="9" height="9" viewBox="0 0 9 9"><path d="M3.4 0.8 H5.6 V3.4 H8.2 V5.6 H5.6 V8.2 H3.4 V5.6 H0.8 V3.4 H3.4 Z" fill="#72c472" stroke="#56ad56" stroke-width="0.7" stroke-linejoin="round"/></svg><svg class="a" style="left:18.6px;top:0px" width="10" height="9" viewBox="0 0 10 9"><path d="M0.7 1.4 H3.8 L4.6 0.6 L5.4 1.4 H8.6 V8.2 H0.7 Z" fill="#fbfbfb" stroke="#ababab" stroke-width="0.8"/><path d="M4.9 6.1 H9.3 M7.1 3.9 V8.6" stroke="#3fb43f" stroke-width="1.1"/></svg></div></div>
<div class="cell" style="left:672.3px;top:317.0px;width:106.00000000000004px"><div class="ev" style="height:14px;background:#fde9e9"><div class="dot" style="top:6px"></div><div class="a" style="left:6.5px;top:2.2px"><span class="lb" style="background:#e8363a;width:42px">石田第1工場</span></div><svg class="a" style="left:50.2px;top:3.2px" width="9" height="7" viewBox="0 0 9 7"><path d="M1.2 1.8 C0.5 4.6 1.8 6 4.2 6 C6.6 6 8 5 7.8 3.2 C7.6 1.6 6.6 1.3 5.2 1.5" fill="none" stroke="#acacac" stroke-width="1.3"/><path d="M5.8 0 L3.5 1.6 L5.8 3.1 Z" fill="#acacac"/></svg></div><div class="ev" style="height:24px;background:#f2ecfb"><div class="t" style="top:1.6px">8:45-9:00</div><div class="tl" style="top:12px"><span class="lb" style="background:#a98bd5;width:16.5px">朝礼</span>全体朝礼</div><svg class="a" style="left:58.4px;top:13.4px" width="9" height="7" viewBox="0 0 9 7"><path d="M1.2 1.8 C0.5 4.6 1.8 6 4.2 6 C6.6 6 8 5 7.8 3.2 C7.6 1.6 6.6 1.3 5.2 1.5" fill="none" stroke="#acacac" stroke-width="1.3"/><path d="M5.8 0 L3.5 1.6 L5.8 3.1 Z" fill="#acacac"/></svg><svg class="a" style="left:67.4px;top:12px" width="11" height="10" viewBox="0 0 11 10"><rect x="0.6" y="0.6" width="7.4" height="5.4" fill="#f0f0f0" stroke="#858585" stroke-width="1"/><path d="M2 1.8 L3.8 3.4" stroke="#aaa" stroke-width="0.6"/><circle cx="8.4" cy="4" r="1.3" fill="#4a98d6"/><path d="M6.6 8.6 Q6.8 5.6 8.4 5.6 Q10.2 5.6 10.4 8.6 Z" fill="#4a98d6"/><circle cx="5.4" cy="5.9" r="1.5" fill="#6cc47a"/><path d="M2.6 9.8 Q2.9 7.4 5.4 7.4 Q7.9 7.4 8.2 9.8 Z" fill="#6cc47a"/></svg></div><div style="position:relative;height:9px;margin-top:7px"><svg class="a" style="left:3.4px;top:0px" width="9" height="9" viewBox="0 0 9 9"><path d="M3.4 0.8 H5.6 V3.4 H8.2 V5.6 H5.6 V8.2 H3.4 V5.6 H0.8 V3.4 H3.4 Z" fill="#72c472" stroke="#56ad56" stroke-width="0.7" stroke-linejoin="round"/></svg><svg class="a" style="left:18.6px;top:0px" width="10" height="9" viewBox="0 0 10 9"><path d="M0.7 1.4 H3.8 L4.6 0.6 L5.4 1.4 H8.6 V8.2 H0.7 Z" fill="#fbfbfb" stroke="#ababab" stroke-width="0.8"/><path d="M4.9 6.1 H9.3 M7.1 3.9 V8.6" stroke="#3fb43f" stroke-width="1.1"/></svg></div></div>
<div class="cell" style="left:779.5px;top:317.0px;width:105.40000000000002px"><div class="ev" style="height:14px;background:#fde9e9"><div class="dot" style="top:6px"></div><div class="a" style="left:6.5px;top:2.2px"><span class="lb" style="background:#e8363a;width:42px">石田第1工場</span></div><svg class="a" style="left:50.2px;top:3.2px" width="9" height="7" viewBox="0 0 9 7"><path d="M1.2 1.8 C0.5 4.6 1.8 6 4.2 6 C6.6 6 8 5 7.8 3.2 C7.6 1.6 6.6 1.3 5.2 1.5" fill="none" stroke="#acacac" stroke-width="1.3"/><path d="M5.8 0 L3.5 1.6 L5.8 3.1 Z" fill="#acacac"/></svg></div><div class="ev" style="height:24px;background:#f2ecfb"><div class="t" style="top:1.6px">8:45-9:00</div><div class="tl" style="top:12px"><span class="lb" style="background:#a98bd5;width:16.5px">朝礼</span>全体朝礼</div><svg class="a" style="left:58.4px;top:13.4px" width="9" height="7" viewBox="0 0 9 7"><path d="M1.2 1.8 C0.5 4.6 1.8 6 4.2 6 C6.6 6 8 5 7.8 3.2 C7.6 1.6 6.6 1.3 5.2 1.5" fill="none" stroke="#acacac" stroke-width="1.3"/><path d="M5.8 0 L3.5 1.6 L5.8 3.1 Z" fill="#acacac"/></svg><svg class="a" style="left:67.4px;top:12px" width="11" height="10" viewBox="0 0 11 10"><rect x="0.6" y="0.6" width="7.4" height="5.4" fill="#f0f0f0" stroke="#858585" stroke-width="1"/><path d="M2 1.8 L3.8 3.4" stroke="#aaa" stroke-width="0.6"/><circle cx="8.4" cy="4" r="1.3" fill="#4a98d6"/><path d="M6.6 8.6 Q6.8 5.6 8.4 5.6 Q10.2 5.6 10.4 8.6 Z" fill="#4a98d6"/><circle cx="5.4" cy="5.9" r="1.5" fill="#6cc47a"/><path d="M2.6 9.8 Q2.9 7.4 5.4 7.4 Q7.9 7.4 8.2 9.8 Z" fill="#6cc47a"/></svg></div><div class="ev" style="height:24px;background:#e4effb"><div class="t" style="top:1.6px">13:00-15:00</div><div class="tl" style="top:12px"><span class="lb" style="background:#2f7ed6;width:16.5px">会議</span>工程改善企画</div></div><div style="position:relative;height:9px;margin-top:7px"><svg class="a" style="left:3.4px;top:0px" width="9" height="9" viewBox="0 0 9 9"><path d="M3.4 0.8 H5.6 V3.4 H8.2 V5.6 H5.6 V8.2 H3.4 V5.6 H0.8 V3.4 H3.4 Z" fill="#72c472" stroke="#56ad56" stroke-width="0.7" stroke-linejoin="round"/></svg><svg class="a" style="left:18.6px;top:0px" width="10" height="9" viewBox="0 0 10 9"><path d="M0.7 1.4 H3.8 L4.6 0.6 L5.4 1.4 H8.6 V8.2 H0.7 Z" fill="#fbfbfb" stroke="#ababab" stroke-width="0.8"/><path d="M4.9 6.1 H9.3 M7.1 3.9 V8.6" stroke="#3fb43f" stroke-width="1.1"/></svg></div></div>
<div class="cell" style="left:139.9px;top:413.3px;width:105.3px"><div class="ev" style="height:14px;background:#fbf9e8"><div class="dot" style="top:6px"></div><div class="a" style="left:6.5px;top:2.2px"><span class="lb" style="background:#d8b40a;width:24px">事務所</span></div><svg class="a" style="left:32.2px;top:3.2px" width="9" height="7" viewBox="0 0 9 7"><path d="M1.2 1.8 C0.5 4.6 1.8 6 4.2 6 C6.6 6 8 5 7.8 3.2 C7.6 1.6 6.6 1.3 5.2 1.5" fill="none" stroke="#acacac" stroke-width="1.3"/><path d="M5.8 0 L3.5 1.6 L5.8 3.1 Z" fill="#acacac"/></svg></div><div class="ev" style="height:24px;background:#f2ecfb"><div class="t" style="top:1.6px">8:45-9:00</div><div class="tl" style="top:12px"><span class="lb" style="background:#a98bd5;width:16.5px">朝礼</span>全体朝礼</div><svg class="a" style="left:58.4px;top:13.4px" width="9" height="7" viewBox="0 0 9 7"><path d="M1.2 1.8 C0.5 4.6 1.8 6 4.2 6 C6.6 6 8 5 7.8 3.2 C7.6 1.6 6.6 1.3 5.2 1.5" fill="none" stroke="#acacac" stroke-width="1.3"/><path d="M5.8 0 L3.5 1.6 L5.8 3.1 Z" fill="#acacac"/></svg><svg class="a" style="left:67.4px;top:12px" width="11" height="10" viewBox="0 0 11 10"><rect x="0.6" y="0.6" width="7.4" height="5.4" fill="#f0f0f0" stroke="#858585" stroke-width="1"/><path d="M2 1.8 L3.8 3.4" stroke="#aaa" stroke-width="0.6"/><circle cx="8.4" cy="4" r="1.3" fill="#4a98d6"/><path d="M6.6 8.6 Q6.8 5.6 8.4 5.6 Q10.2 5.6 10.4 8.6 Z" fill="#4a98d6"/><circle cx="5.4" cy="5.9" r="1.5" fill="#6cc47a"/><path d="M2.6 9.8 Q2.9 7.4 5.4 7.4 Q7.9 7.4 8.2 9.8 Z" fill="#6cc47a"/></svg></div><div class="ev" style="height:33.5px;background:#fde7e7"><div class="t" style="top:1.6px">13:00-14:00</div><div class="tl" style="top:12px"><span class="lb" style="background:#e8363a;width:42px">石田第1工場</span>設備確認して</div><div class="tl" style="top:21.5px">きます</div></div></div>
<div class="cell" style="left:246.4px;top:413.3px;width:105.60000000000001px"><div class="ev" style="height:14px;background:#fbf9e8"><div class="dot" style="top:6px"></div><div class="a" style="left:6.5px;top:2.2px"><span class="lb" style="background:#d8b40a;width:24px">事務所</span></div><svg class="a" style="left:32.2px;top:3.2px" width="9" height="7" viewBox="0 0 9 7"><path d="M1.2 1.8 C0.5 4.6 1.8 6 4.2 6 C6.6 6 8 5 7.8 3.2 C7.6 1.6 6.6 1.3 5.2 1.5" fill="none" stroke="#acacac" stroke-width="1.3"/><path d="M5.8 0 L3.5 1.6 L5.8 3.1 Z" fill="#acacac"/></svg></div><div class="ev" style="height:24px;background:#f2ecfb"><div class="t" style="top:1.6px">8:45-9:00</div><div class="tl" style="top:12px"><span class="lb" style="background:#a98bd5;width:16.5px">朝礼</span>全体朝礼</div><svg class="a" style="left:58.4px;top:13.4px" width="9" height="7" viewBox="0 0 9 7"><path d="M1.2 1.8 C0.5 4.6 1.8 6 4.2 6 C6.6 6 8 5 7.8 3.2 C7.6 1.6 6.6 1.3 5.2 1.5" fill="none" stroke="#acacac" stroke-width="1.3"/><path d="M5.8 0 L3.5 1.6 L5.8 3.1 Z" fill="#acacac"/></svg><svg class="a" style="left:67.4px;top:12px" width="11" height="10" viewBox="0 0 11 10"><rect x="0.6" y="0.6" width="7.4" height="5.4" fill="#f0f0f0" stroke="#858585" stroke-width="1"/><path d="M2 1.8 L3.8 3.4" stroke="#aaa" stroke-width="0.6"/><circle cx="8.4" cy="4" r="1.3" fill="#4a98d6"/><path d="M6.6 8.6 Q6.8 5.6 8.4 5.6 Q10.2 5.6 10.4 8.6 Z" fill="#4a98d6"/><circle cx="5.4" cy="5.9" r="1.5" fill="#6cc47a"/><path d="M2.6 9.8 Q2.9 7.4 5.4 7.4 Q7.9 7.4 8.2 9.8 Z" fill="#6cc47a"/></svg></div><div class="ev" style="height:34px;background:#e4effb"><div class="t" style="top:1.6px">17:00-18:00</div><div class="tl" style="top:12px"><span class="lb" style="background:#2f7ed6;width:16.5px">会議</span>製造部ミーティング</div><svg class="a" style="left:6.4px;top:22.5px" width="9" height="7" viewBox="0 0 9 7"><path d="M1.2 1.8 C0.5 4.6 1.8 6 4.2 6 C6.6 6 8 5 7.8 3.2 C7.6 1.6 6.6 1.3 5.2 1.5" fill="none" stroke="#acacac" stroke-width="1.3"/><path d="M5.8 0 L3.5 1.6 L5.8 3.1 Z" fill="#acacac"/></svg><svg class="a" style="left:15.4px;top:21px" width="11" height="10" viewBox="0 0 11 10"><rect x="0.6" y="0.6" width="7.4" height="5.4" fill="#f0f0f0" stroke="#858585" stroke-width="1"/><path d="M2 1.8 L3.8 3.4" stroke="#aaa" stroke-width="0.6"/><circle cx="8.4" cy="4" r="1.3" fill="#4a98d6"/><path d="M6.6 8.6 Q6.8 5.6 8.4 5.6 Q10.2 5.6 10.4 8.6 Z" fill="#4a98d6"/><circle cx="5.4" cy="5.9" r="1.5" fill="#6cc47a"/><path d="M2.6 9.8 Q2.9 7.4 5.4 7.4 Q7.9 7.4 8.2 9.8 Z" fill="#6cc47a"/></svg></div></div>
<div class="cell" style="left:353.2px;top:413.3px;width:104.99999999999999px"><div class="ev" style="height:11px;overflow:visible"><svg class="a" style="left:2.4px;top:-0.2px" width="9" height="10" viewBox="0 0 9 10"><rect x="0.5" y="0.5" width="7" height="9" fill="#f4f4f4" stroke="#b0b0b0" stroke-width="0.7"/><path d="M2.7 0.8 V9.2 M5.2 0.8 V9.2" stroke="#d0d0d0" stroke-width="0.6"/><path d="M0.8 4.8 L3.6 7.6 L8.4 2.6" fill="none" stroke="#e03030" stroke-width="1.5"/></svg><div class="a" style="left:12.9px;top:0.5px;font-size:7.8px;color:#2f6aa9;white-space:nowrap;line-height:9px;-webkit-text-stroke:0.15px #2f6aa9">作業指導書申請(1)</div></div><div class="ev" style="height:14px;background:#fbf9e8"><div class="dot" style="top:6px"></div><div class="a" style="left:6.5px;top:2.2px"><span class="lb" style="background:#d8b40a;width:24px">事務所</span></div><svg class="a" style="left:32.2px;top:3.2px" width="9" height="7" viewBox="0 0 9 7"><path d="M1.2 1.8 C0.5 4.6 1.8 6 4.2 6 C6.6 6 8 5 7.8 3.2 C7.6 1.6 6.6 1.3 5.2 1.5" fill="none" stroke="#acacac" stroke-width="1.3"/><path d="M5.8 0 L3.5 1.6 L5.8 3.1 Z" fill="#acacac"/></svg></div><div class="ev" style="height:24px;background:#f2ecfb"><div class="t" style="top:1.6px">8:45-9:00</div><div class="tl" style="top:12px"><span class="lb" style="background:#a98bd5;width:16.5px">朝礼</span>全体朝礼</div><svg class="a" style="left:58.4px;top:13.4px" width="9" height="7" viewBox="0 0 9 7"><path d="M1.2 1.8 C0.5 4.6 1.8 6 4.2 6 C6.6 6 8 5 7.8 3.2 C7.6 1.6 6.6 1.3 5.2 1.5" fill="none" stroke="#acacac" stroke-width="1.3"/><path d="M5.8 0 L3.5 1.6 L5.8 3.1 Z" fill="#acacac"/></svg><svg class="a" style="left:67.4px;top:12px" width="11" height="10" viewBox="0 0 11 10"><rect x="0.6" y="0.6" width="7.4" height="5.4" fill="#f0f0f0" stroke="#858585" stroke-width="1"/><path d="M2 1.8 L3.8 3.4" stroke="#aaa" stroke-width="0.6"/><circle cx="8.4" cy="4" r="1.3" fill="#4a98d6"/><path d="M6.6 8.6 Q6.8 5.6 8.4 5.6 Q10.2 5.6 10.4 8.6 Z" fill="#4a98d6"/><circle cx="5.4" cy="5.9" r="1.5" fill="#6cc47a"/><path d="M2.6 9.8 Q2.9 7.4 5.4 7.4 Q7.9 7.4 8.2 9.8 Z" fill="#6cc47a"/></svg></div><div style="position:relative;height:9px;margin-top:7px"><svg class="a" style="left:3.4px;top:0px" width="9" height="9" viewBox="0 0 9 9"><path d="M3.4 0.8 H5.6 V3.4 H8.2 V5.6 H5.6 V8.2 H3.4 V5.6 H0.8 V3.4 H3.4 Z" fill="#72c472" stroke="#56ad56" stroke-width="0.7" stroke-linejoin="round"/></svg><svg class="a" style="left:18.6px;top:0px" width="10" height="9" viewBox="0 0 10 9"><path d="M0.7 1.4 H3.8 L4.6 0.6 L5.4 1.4 H8.6 V8.2 H0.7 Z" fill="#fbfbfb" stroke="#ababab" stroke-width="0.8"/><path d="M4.9 6.1 H9.3 M7.1 3.9 V8.6" stroke="#3fb43f" stroke-width="1.1"/></svg></div></div>
<div class="cell" style="left:459.4px;top:413.3px;width:105.59999999999995px"><div style="position:relative;height:9px;margin-top:5.5px"><svg class="a" style="left:3.4px;top:0px" width="9" height="9" viewBox="0 0 9 9"><path d="M3.4 0.8 H5.6 V3.4 H8.2 V5.6 H5.6 V8.2 H3.4 V5.6 H0.8 V3.4 H3.4 Z" fill="#72c472" stroke="#56ad56" stroke-width="0.7" stroke-linejoin="round"/></svg><svg class="a" style="left:18.6px;top:0px" width="10" height="9" viewBox="0 0 10 9"><path d="M0.7 1.4 H3.8 L4.6 0.6 L5.4 1.4 H8.6 V8.2 H0.7 Z" fill="#fbfbfb" stroke="#ababab" stroke-width="0.8"/><path d="M4.9 6.1 H9.3 M7.1 3.9 V8.6" stroke="#3fb43f" stroke-width="1.1"/></svg></div></div>
<div class="cell" style="left:566.1999999999999px;top:413.3px;width:104.90000000000002px"><div style="position:relative;height:9px;margin-top:5.5px"><svg class="a" style="left:3.4px;top:0px" width="9" height="9" viewBox="0 0 9 9"><path d="M3.4 0.8 H5.6 V3.4 H8.2 V5.6 H5.6 V8.2 H3.4 V5.6 H0.8 V3.4 H3.4 Z" fill="#72c472" stroke="#56ad56" stroke-width="0.7" stroke-linejoin="round"/></svg><svg class="a" style="left:18.6px;top:0px" width="10" height="9" viewBox="0 0 10 9"><path d="M0.7 1.4 H3.8 L4.6 0.6 L5.4 1.4 H8.6 V8.2 H0.7 Z" fill="#fbfbfb" stroke="#ababab" stroke-width="0.8"/><path d="M4.9 6.1 H9.3 M7.1 3.9 V8.6" stroke="#3fb43f" stroke-width="1.1"/></svg></div></div>
<div class="cell" style="left:672.3px;top:413.3px;width:106.00000000000004px"><div class="ev" style="height:14px;background:#fbf9e8"><div class="dot" style="top:6px"></div><div class="a" style="left:6.5px;top:2.2px"><span class="lb" style="background:#d8b40a;width:24px">事務所</span></div><svg class="a" style="left:32.2px;top:3.2px" width="9" height="7" viewBox="0 0 9 7"><path d="M1.2 1.8 C0.5 4.6 1.8 6 4.2 6 C6.6 6 8 5 7.8 3.2 C7.6 1.6 6.6 1.3 5.2 1.5" fill="none" stroke="#acacac" stroke-width="1.3"/><path d="M5.8 0 L3.5 1.6 L5.8 3.1 Z" fill="#acacac"/></svg></div><div class="ev" style="height:24px;background:#f2ecfb"><div class="t" style="top:1.6px">8:45-9:00</div><div class="tl" style="top:12px"><span class="lb" style="background:#a98bd5;width:16.5px">朝礼</span>全体朝礼</div><svg class="a" style="left:58.4px;top:13.4px" width="9" height="7" viewBox="0 0 9 7"><path d="M1.2 1.8 C0.5 4.6 1.8 6 4.2 6 C6.6 6 8 5 7.8 3.2 C7.6 1.6 6.6 1.3 5.2 1.5" fill="none" stroke="#acacac" stroke-width="1.3"/><path d="M5.8 0 L3.5 1.6 L5.8 3.1 Z" fill="#acacac"/></svg><svg class="a" style="left:67.4px;top:12px" width="11" height="10" viewBox="0 0 11 10"><rect x="0.6" y="0.6" width="7.4" height="5.4" fill="#f0f0f0" stroke="#858585" stroke-width="1"/><path d="M2 1.8 L3.8 3.4" stroke="#aaa" stroke-width="0.6"/><circle cx="8.4" cy="4" r="1.3" fill="#4a98d6"/><path d="M6.6 8.6 Q6.8 5.6 8.4 5.6 Q10.2 5.6 10.4 8.6 Z" fill="#4a98d6"/><circle cx="5.4" cy="5.9" r="1.5" fill="#6cc47a"/><path d="M2.6 9.8 Q2.9 7.4 5.4 7.4 Q7.9 7.4 8.2 9.8 Z" fill="#6cc47a"/></svg></div><div style="position:relative;height:9px;margin-top:7px"><svg class="a" style="left:3.4px;top:0px" width="9" height="9" viewBox="0 0 9 9"><path d="M3.4 0.8 H5.6 V3.4 H8.2 V5.6 H5.6 V8.2 H3.4 V5.6 H0.8 V3.4 H3.4 Z" fill="#72c472" stroke="#56ad56" stroke-width="0.7" stroke-linejoin="round"/></svg><svg class="a" style="left:18.6px;top:0px" width="10" height="9" viewBox="0 0 10 9"><path d="M0.7 1.4 H3.8 L4.6 0.6 L5.4 1.4 H8.6 V8.2 H0.7 Z" fill="#fbfbfb" stroke="#ababab" stroke-width="0.8"/><path d="M4.9 6.1 H9.3 M7.1 3.9 V8.6" stroke="#3fb43f" stroke-width="1.1"/></svg></div></div>
<div class="cell" style="left:779.5px;top:413.3px;width:105.40000000000002px"><div class="ev" style="height:14px;background:#fbf9e8"><div class="dot" style="top:6px"></div><div class="a" style="left:6.5px;top:2.2px"><span class="lb" style="background:#d8b40a;width:24px">事務所</span></div><svg class="a" style="left:32.2px;top:3.2px" width="9" height="7" viewBox="0 0 9 7"><path d="M1.2 1.8 C0.5 4.6 1.8 6 4.2 6 C6.6 6 8 5 7.8 3.2 C7.6 1.6 6.6 1.3 5.2 1.5" fill="none" stroke="#acacac" stroke-width="1.3"/><path d="M5.8 0 L3.5 1.6 L5.8 3.1 Z" fill="#acacac"/></svg></div><div class="ev" style="height:24px;background:#f2ecfb"><div class="t" style="top:1.6px">8:45-9:00</div><div class="tl" style="top:12px"><span class="lb" style="background:#a98bd5;width:16.5px">朝礼</span>全体朝礼</div><svg class="a" style="left:58.4px;top:13.4px" width="9" height="7" viewBox="0 0 9 7"><path d="M1.2 1.8 C0.5 4.6 1.8 6 4.2 6 C6.6 6 8 5 7.8 3.2 C7.6 1.6 6.6 1.3 5.2 1.5" fill="none" stroke="#acacac" stroke-width="1.3"/><path d="M5.8 0 L3.5 1.6 L5.8 3.1 Z" fill="#acacac"/></svg><svg class="a" style="left:67.4px;top:12px" width="11" height="10" viewBox="0 0 11 10"><rect x="0.6" y="0.6" width="7.4" height="5.4" fill="#f0f0f0" stroke="#858585" stroke-width="1"/><path d="M2 1.8 L3.8 3.4" stroke="#aaa" stroke-width="0.6"/><circle cx="8.4" cy="4" r="1.3" fill="#4a98d6"/><path d="M6.6 8.6 Q6.8 5.6 8.4 5.6 Q10.2 5.6 10.4 8.6 Z" fill="#4a98d6"/><circle cx="5.4" cy="5.9" r="1.5" fill="#6cc47a"/><path d="M2.6 9.8 Q2.9 7.4 5.4 7.4 Q7.9 7.4 8.2 9.8 Z" fill="#6cc47a"/></svg></div><div style="position:relative;height:9px;margin-top:7px"><svg class="a" style="left:3.4px;top:0px" width="9" height="9" viewBox="0 0 9 9"><path d="M3.4 0.8 H5.6 V3.4 H8.2 V5.6 H5.6 V8.2 H3.4 V5.6 H0.8 V3.4 H3.4 Z" fill="#72c472" stroke="#56ad56" stroke-width="0.7" stroke-linejoin="round"/></svg><svg class="a" style="left:18.6px;top:0px" width="10" height="9" viewBox="0 0 10 9"><path d="M0.7 1.4 H3.8 L4.6 0.6 L5.4 1.4 H8.6 V8.2 H0.7 Z" fill="#fbfbfb" stroke="#ababab" stroke-width="0.8"/><path d="M4.9 6.1 H9.3 M7.1 3.9 V8.6" stroke="#3fb43f" stroke-width="1.1"/></svg></div></div>
<svg class="a" style="left:509.6px;top:248.6px" width="6" height="8" viewBox="0 0 6 8"><path d="M0.5 0.5 L0.5 5.4 L1.8 4.3 L3 7.2 L4 6.8 L2.9 4 L4.6 4 Z" fill="#111" stroke="#fff" stroke-width="0.35"/></svg>
</body></html>
